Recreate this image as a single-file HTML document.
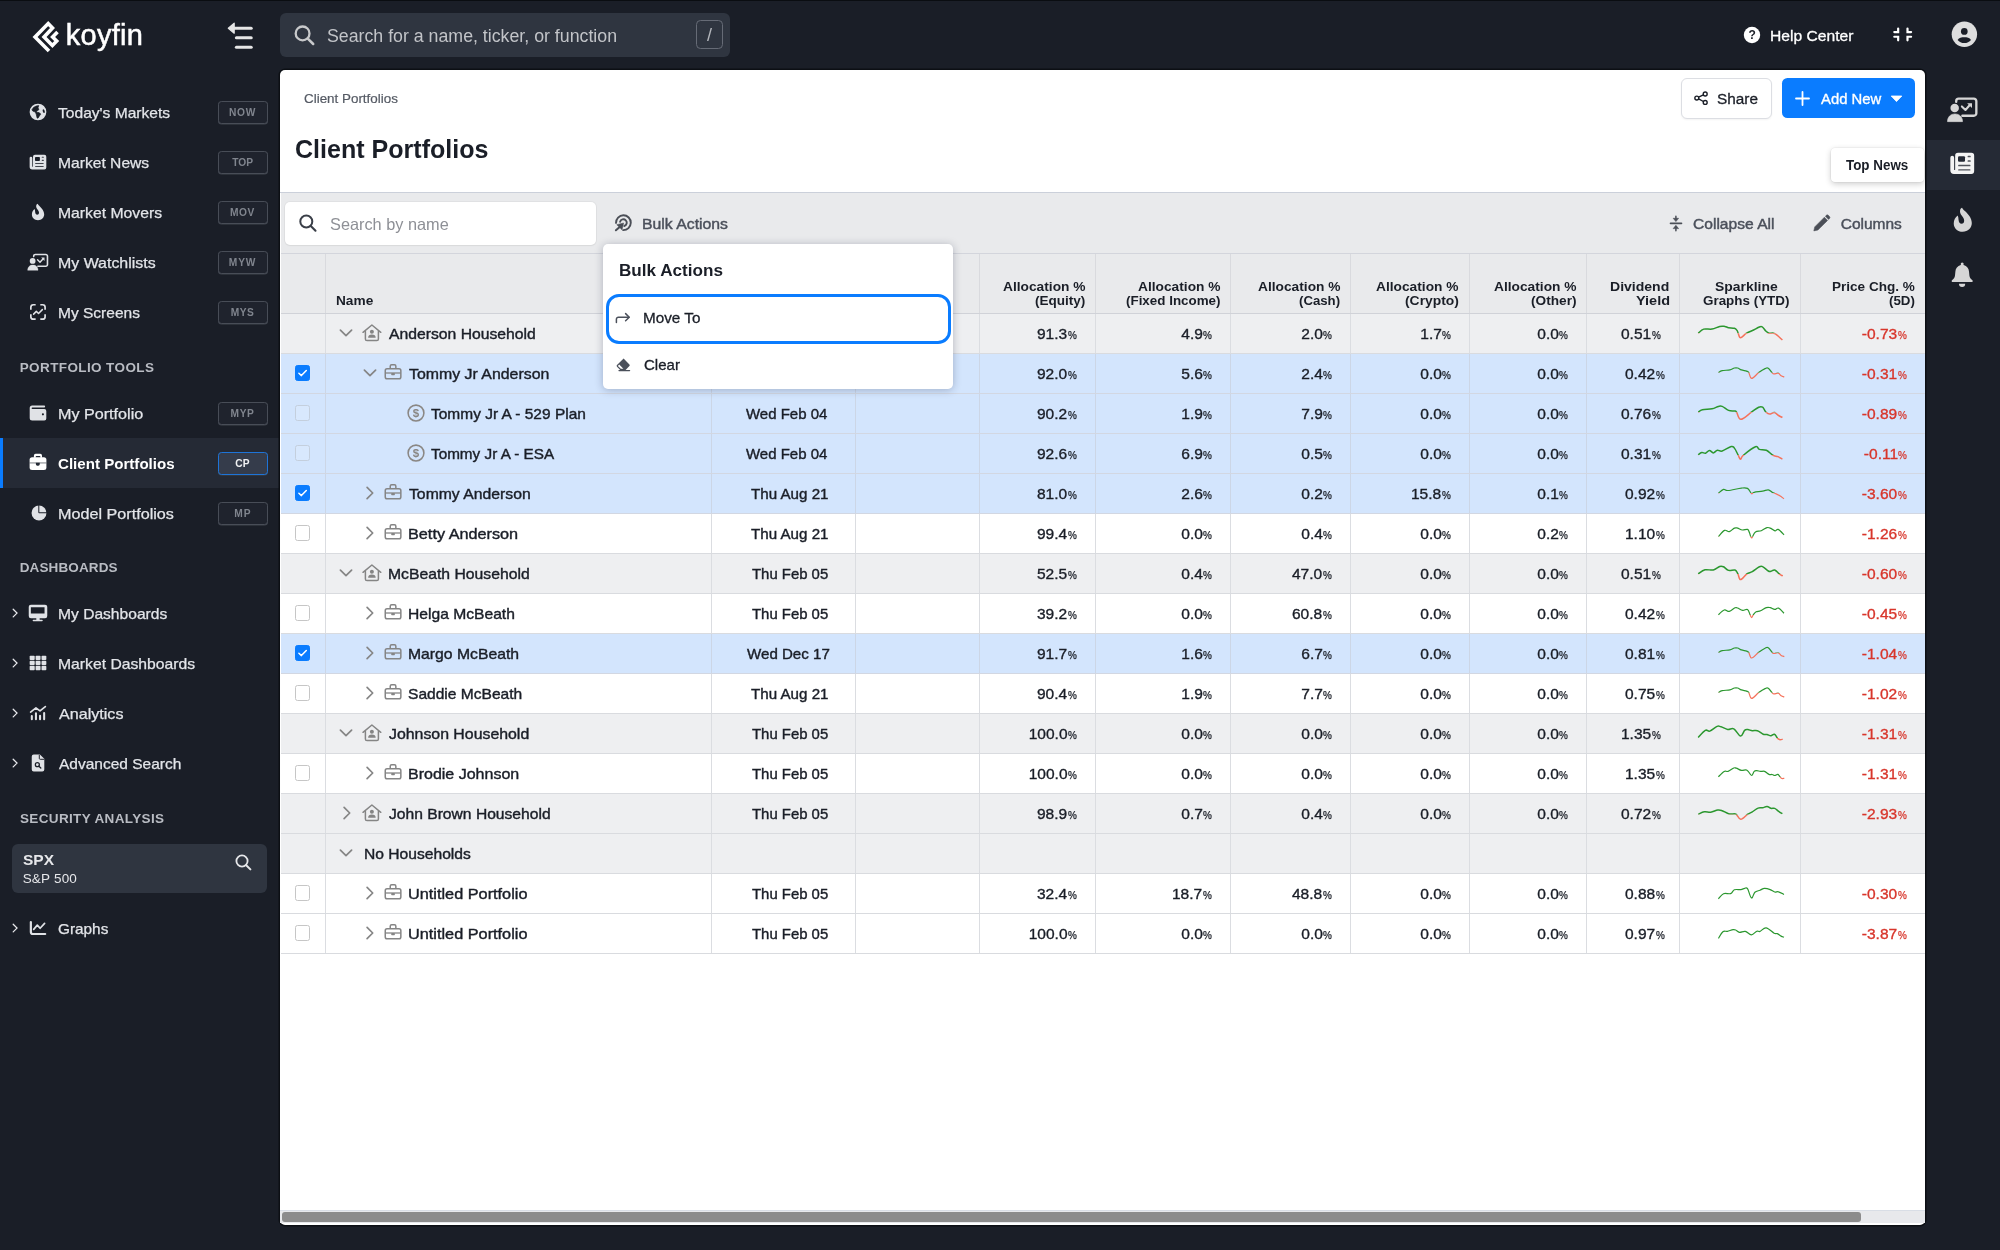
<!DOCTYPE html>
<html><head><meta charset="utf-8"><title>Client Portfolios</title>
<style>
*{box-sizing:border-box;margin:0;padding:0}
html,body{width:2000px;height:1250px;overflow:hidden;background:#1a1e27;font-family:"Liberation Sans",sans-serif;}
#root{position:absolute;left:0;top:0;width:2000px;height:1250px;overflow:hidden;will-change:transform;background:#1a1e27}
.a{position:absolute}
.t{position:absolute;white-space:nowrap;line-height:20px;height:20px}
.b{font-weight:bold}
svg{position:absolute;overflow:visible}
.badge{position:absolute;left:218px;width:50px;height:23px;border:1.2px solid #484d57;border-radius:3.5px;background:#1f232d;box-shadow:0 0.6px 0 #3f444d}
.row{position:absolute;left:280px;width:1645px;height:40px;border-bottom:1px solid #d9dbdf}
.v{position:absolute;top:1px;height:40px;line-height:40px;font-size:15px;color:#1a1e27;white-space:nowrap;text-align:right;letter-spacing:0.25px;-webkit-text-stroke:0.25px #1a1e27}
.v small{font-size:10px;letter-spacing:0;margin-left:-0.3px}
.neg{color:#d8362c;-webkit-text-stroke:0.25px #d8362c}
.cb{position:absolute;left:15px;top:11.3px;width:15.2px;height:15.6px;border:1px solid #c6c6c6;border-radius:2.5px;background:#fff}
.cb.on{background:#0a7cff;border-color:#0a7cff}
.cb.dis{background:rgba(255,255,255,0.12);border-color:#c4cfdd}
</style></head>
<body><div id="root">
<div class="a" style="left:0;top:0;width:2000px;height:1.3px;background:#0a0d11"></div>
<svg style="left:0px;top:0px;" width="70" height="70" viewBox="0 0 70 70"><path d="M49,51 L35.05,37.06 L48.2,23.6 L52.5,28.1 L44.05,37.06 L52.4,45.4 L56.7,41.1 L52.6,37 L57.5,32.1" fill="none" stroke="#fff" stroke-width="3.6" stroke-linejoin="miter" stroke-miterlimit="10"/></svg>
<div class="t" style="left:65.73px;top:16.6px;font-size:29px;color:#fff;line-height:36px;height:36px;letter-spacing:0.272px;-webkit-text-stroke:0.5px #fff;">koyfin</div>
<svg style="left:220px;top:10px;" width="40" height="50" viewBox="0 0 40 50"><g fill="none" stroke="#e6e6e6" stroke-width="3.1" stroke-linecap="round" stroke-linejoin="round"><path d="M13,18.2 H31.2"/><path d="M16.4,27.7 H31.2"/><path d="M16.4,37.3 H31.2"/></g><path d="M8.3,18.2 L14.2,13.2 V23.2 Z" fill="#e6e6e6" stroke="#e6e6e6" stroke-width="1.2" stroke-linejoin="round"/></svg>
<div class="a" style="left:280px;top:13px;width:450px;height:44px;background:#2f3540;border-radius:6px"></div>
<svg style="left:292px;top:23px;" width="26" height="26" viewBox="0 0 26 26"><circle cx="10.6" cy="10.4" r="6.9" fill="none" stroke="#c8c9cb" stroke-width="2.3"/><path d="M15.8,15.6 L21.2,21" stroke="#c8c9cb" stroke-width="2.5" stroke-linecap="round"/></svg>
<div class="t" style="left:327.40px;top:23.6px;font-size:17.5px;color:#c2c4c8;line-height:24px;height:24px;transform:scaleX(1.0142);transform-origin:0 50%;">Search for a name, ticker, or function</div>
<div class="a" style="left:695.6px;top:20.2px;width:27.8px;height:29.2px;border:1px solid #666b76;border-radius:4.5px;color:#b4b7bc;font-size:18px;line-height:28px;text-align:center">/</div>
<svg style="left:1743px;top:26px;" width="18" height="18" viewBox="0 0 18 18"><circle cx="9" cy="9" r="8.2" fill="#fff"/></svg>
<div class="t b" style="left:1748.5px;top:27px;font-size:12px;line-height:16px;height:16px;color:#1a1e27">?</div>
<div class="t" style="left:1769.99px;top:25.6px;font-size:15.5px;color:#fff;line-height:20px;height:20px;-webkit-text-stroke:0.3px #fff;transform:scaleX(1.0087);transform-origin:0 50%;">Help Center</div>
<svg style="left:1880px;top:15px;" width="40" height="40" viewBox="0 0 40 40"><g fill="none" stroke="#fff" stroke-width="2.2" stroke-linecap="round" stroke-linejoin="miter"><path d="M14.3,17.05 H18.15 V13.5"/><path d="M31.1,17.05 H27.5 V13.5"/><path d="M14.3,21.75 H18.15 V25.3"/><path d="M31.1,21.75 H27.5 V25.3"/></g></svg>
<svg style="left:1951px;top:21px;" width="27" height="27" viewBox="0 0 27 27"><circle cx="13.4" cy="13.2" r="12.7" fill="#dedede"/><circle cx="13.3" cy="10.4" r="3.35" fill="#1a1e27"/><path d="M6.6,18.9 C8,16.7 10.6,16.3 13.3,16.3 C16,16.3 18.6,16.7 20,18.9 C18.4,20.9 16,22.1 13.3,22.1 C10.6,22.1 8.2,20.9 6.6,18.9 Z" fill="#1a1e27"/></svg>
<div class="a" style="left:0;top:438px;width:279px;height:50px;background:#252a35"></div>
<div class="a" style="left:0;top:438px;width:3px;height:50px;background:#0a7cff"></div>
<div class="t" style="left:58.43px;top:102.6px;font-size:15px;color:#e3e5e9;line-height:20px;height:20px;-webkit-text-stroke:0.25px #e3e5e9;transform:scaleX(1.0395);transform-origin:0 50%;">Today&#x27;s Markets</div>
<div class="badge" style="top:100.9px;"></div>
<div class="t" style="left:229.02px;top:106.9px;font-size:10.2px;color:#80858e;line-height:12px;height:12px;font-weight:bold;letter-spacing:0.676px;">NOW</div>
<svg style="left:28.30px;top:101.55px" width="20.00" height="20.00" viewBox="0 0 20 20"><circle cx="10" cy="10" r="8.35" fill="#e0e2e6"/><path d="M4,7.65 L5.55,5.4 L8.24,4.05 L10.7,3.6 L10.03,5.85 L10.9,7.65 L9.1,8.75 L8.2,9.9 L11.4,10.75 L12.7,12.1 L11.4,13.9 L10,16.15 L9.1,15.95 L8.2,12.1 L7.3,10.1 L4.7,9 Z" fill="#1a1e27" stroke="#1a1e27" stroke-width="0.7" stroke-linejoin="round"/><ellipse cx="15.74" cy="9.1" rx="0.95" ry="1.9" transform="rotate(-18 15.74 9.1)" fill="#1a1e27"/></svg>
<div class="t" style="left:57.56px;top:152.6px;font-size:15px;color:#e3e5e9;line-height:20px;height:20px;-webkit-text-stroke:0.25px #e3e5e9;transform:scaleX(1.0418);transform-origin:0 50%;">Market News</div>
<div class="badge" style="top:150.9px;"></div>
<div class="t" style="left:232.18px;top:156.9px;font-size:10.2px;color:#80858e;line-height:12px;height:12px;font-weight:bold;letter-spacing:0.031px;">TOP</div>
<svg style="left:28.30px;top:151.80px" width="20.00" height="20.00" viewBox="0 0 20 20"><path d="M7,2.7 H16.3 A2,2 0 0 1 18.3,4.7 V15.4 A2,2 0 0 1 16.3,17.4 H4.2 A2.6,2.6 0 0 1 1.63,14.8 V6.1 A1.33,1.33 0 0 1 4.3,6.1 V14.4 A0.35,0.35 0 0 0 5,14.4 V4.7 A2,2 0 0 1 7,2.7 Z" fill="#e0e2e6"/><rect x="7" y="5.05" width="4.9" height="3.9" rx="0.8" fill="#1a1e27"/><rect x="13.7" y="4.8" width="2.2" height="1.0" rx="0.4" fill="#1a1e27" opacity="0.8"/><rect x="13.7" y="7.85" width="2.2" height="1.05" rx="0.4" fill="#1a1e27" opacity="0.8"/><rect x="7.1" y="11.05" width="8.6" height="1.0" rx="0.4" fill="#1a1e27" opacity="0.8"/><rect x="7.1" y="14.1" width="8.6" height="1.0" rx="0.4" fill="#1a1e27" opacity="0.8"/></svg>
<div class="t" style="left:57.55px;top:202.6px;font-size:15px;color:#e3e5e9;line-height:20px;height:20px;-webkit-text-stroke:0.25px #e3e5e9;transform:scaleX(1.0497);transform-origin:0 50%;">Market Movers</div>
<div class="badge" style="top:200.9px;"></div>
<div class="t" style="left:230.02px;top:206.9px;font-size:10.2px;color:#80858e;line-height:12px;height:12px;font-weight:bold;letter-spacing:0.480px;">MOV</div>
<svg style="left:28.10px;top:201.80px" width="20.00" height="20.00" viewBox="0 0 20 20"><path d="M9.56,1.8 C10.3,3 11,3.6 11.9,4.5 C13.6,6.2 16.2,9 16.2,12.3 C16.2,15.7 13.5,18.25 10,18.25 C6.5,18.25 3.9,15.8 3.9,12.6 C3.9,10.2 5,8.2 6.65,7.1 C7,8 7.1,9 7.2,10.2 C7.3,11.8 8.1,12.7 9.2,12.7 C10.3,12.7 11,11.9 11,10.7 C11,9.4 10.2,8.4 9.3,7.2 C8.4,6 7.9,4.6 8.3,3.2 C8.5,2.5 9,2 9.56,1.8 Z" fill="#e0e2e6"/></svg>
<div class="t" style="left:57.54px;top:252.6px;font-size:15px;color:#e3e5e9;line-height:20px;height:20px;-webkit-text-stroke:0.25px #e3e5e9;transform:scaleX(1.0619);transform-origin:0 50%;">My Watchlists</div>
<div class="badge" style="top:250.9px;"></div>
<div class="t" style="left:228.83px;top:256.9px;font-size:10.2px;color:#80858e;line-height:12px;height:12px;font-weight:bold;letter-spacing:0.863px;">MYW</div>
<svg style="left:26.33px;top:251.80px" width="24.00" height="20.00" viewBox="0 0 24 20"><path d="M7.67,4.6 V4.2 A1.7,1.7 0 0 1 9.37,2.5 H19.77 A1.7,1.7 0 0 1 21.47,4.2 V12.5 A1.7,1.7 0 0 1 19.77,14.2 H11.9" fill="none" stroke="#e0e2e6" stroke-width="1.6" stroke-linecap="round"/><circle cx="6.63" cy="8.96" r="2.9" fill="#e0e2e6"/><path d="M1.7,18.25 C1.7,15 3.8,13 6.85,13 C9.9,13 12,15 12,18.25 Z" fill="#e0e2e6" stroke="#e0e2e6" stroke-width="0.4" stroke-linejoin="round"/><path d="M11.55,7.84 L14.02,10.3 L17.15,6.7" fill="none" stroke="#e0e2e6" stroke-width="1.4" stroke-linecap="round" stroke-linejoin="round"/><path d="M15.14,5.6 H18.49 V8.96 Z" fill="#e0e2e6"/></svg>
<div class="t" style="left:57.57px;top:302.6px;font-size:15px;color:#e3e5e9;line-height:20px;height:20px;-webkit-text-stroke:0.25px #e3e5e9;transform:scaleX(1.0342);transform-origin:0 50%;">My Screens</div>
<div class="badge" style="top:300.9px;"></div>
<div class="t" style="left:230.83px;top:306.9px;font-size:10.2px;color:#80858e;line-height:12px;height:12px;font-weight:bold;letter-spacing:0.496px;">MYS</div>
<svg style="left:28.45px;top:302.00px" width="20.00" height="20.00" viewBox="0 0 20 20"><g fill="none" stroke="#e0e2e6" stroke-width="1.7" stroke-linecap="butt" stroke-linejoin="round"><path d="M2.85,7.75 V5.25 A2.5,2.5 0 0 1 5.35,2.75 H7.65"/><path d="M12.3,2.75 H14.6 A2.5,2.5 0 0 1 17.1,5.25 V7.75"/><path d="M17.1,12.2 V14.7 A2.5,2.5 0 0 1 14.6,17.2 H12.3"/><path d="M7.65,17.2 H5.35 A2.5,2.5 0 0 1 2.85,14.7 V12.2"/><path d="M5.63,12.1 L8.31,9.4 L10.55,11.45 L14.35,7.65" stroke-width="1.5" stroke-linecap="round"/></g></svg>
<div class="t" style="left:57.50px;top:403.6px;font-size:15px;color:#e3e5e9;line-height:20px;height:20px;-webkit-text-stroke:0.25px #e3e5e9;transform:scaleX(1.0761);transform-origin:0 50%;">My Portfolio</div>
<div class="badge" style="top:401.9px;"></div>
<div class="t" style="left:230.56px;top:407.9px;font-size:10.2px;color:#80858e;line-height:12px;height:12px;font-weight:bold;letter-spacing:0.597px;">MYP</div>
<svg style="left:28.45px;top:402.55px" width="20.00" height="20.00" viewBox="0 0 20 20"><path d="M4.2,2.5 H16.2 A0.95,0.95 0 0 1 16.2,4.4 H4.4 A0.8,0.8 0 0 0 4.4,6 H16.3 A2,2 0 0 1 18.3,8 V15.5 A2,2 0 0 1 16.3,17.5 H4.2 A2.5,2.5 0 0 1 1.7,15 V5 A2.5,2.5 0 0 1 4.2,2.5 Z" fill="#e0e2e6"/><circle cx="14.92" cy="11.35" r="1.05" fill="#1a1e27"/></svg>
<div class="t" style="left:58.21px;top:453.6px;font-size:15px;color:#fff;line-height:20px;height:20px;font-weight:bold;transform:scaleX(1.0070);transform-origin:0 50%;">Client Portfolios</div>
<div class="badge" style="top:451.9px;border-color:#1e74d8;background:#353c4b;"></div>
<div class="t" style="left:235.13px;top:457.9px;font-size:10.2px;color:#f0f1f3;line-height:12px;height:12px;font-weight:bold;letter-spacing:0.272px;">CP</div>
<svg style="left:28.33px;top:451.95px" width="20.00" height="20.00" viewBox="0 0 20 20"><rect x="1.6" y="5.25" width="16.8" height="12.85" rx="2.5" fill="#fff"/><path d="M5.87,5.75 V3.65 A1.8,1.8 0 0 1 7.67,1.85 H12.23 A1.8,1.8 0 0 1 14.03,3.65 V5.75 H12.37 V4.5 A0.55,0.55 0 0 0 11.82,3.95 H8.32 A0.55,0.55 0 0 0 7.77,4.5 V5.75 Z" fill="#fff"/><path d="M1.6,10.95 H18.4" stroke="#252a35" stroke-width="1.0" opacity="0.6"/><path d="M7.87,10.7 H11.77 V12.2 A1.45,1.45 0 0 1 10.32,13.65 H9.32 A1.45,1.45 0 0 1 7.87,12.2 Z" fill="#252a35"/></svg>
<div class="t" style="left:57.50px;top:503.6px;font-size:15px;color:#e3e5e9;line-height:20px;height:20px;-webkit-text-stroke:0.25px #e3e5e9;transform:scaleX(1.0777);transform-origin:0 50%;">Model Portfolios</div>
<div class="badge" style="top:501.9px;"></div>
<div class="t" style="left:234.14px;top:507.9px;font-size:10.2px;color:#80858e;line-height:12px;height:12px;font-weight:bold;letter-spacing:1.018px;">MP</div>
<svg style="left:28.55px;top:502.80px" width="20.00" height="20.00" viewBox="0 0 20 20"><circle cx="10" cy="10" r="7.45" fill="#e0e2e6"/><path d="M9.8,2 V9.75 H18" fill="none" stroke="#1a1e27" stroke-width="1.0"/></svg>
<div class="t" style="left:57.56px;top:603.6px;font-size:15px;color:#e3e5e9;line-height:20px;height:20px;-webkit-text-stroke:0.25px #e3e5e9;transform:scaleX(1.0400);transform-origin:0 50%;">My Dashboards</div>
<svg style="left:28.45px;top:603.10px" width="20.00" height="20.00" viewBox="0 0 20 20"><path d="M2.95,1.65 H17.05 A2.2,2.2 0 0 1 19.25,3.85 V13 A2.2,2.2 0 0 1 17.05,15.2 H2.95 A2.2,2.2 0 0 1 0.75,13 V3.85 A2.2,2.2 0 0 1 2.95,1.65 Z M2.85,4.15 V10.6 H16.55 V4.15 Z" fill="#e0e2e6" fill-rule="evenodd"/><rect x="8.3" y="15" width="3.35" height="2.2" fill="#e0e2e6"/><rect x="4.65" y="16.75" width="10.1" height="1.55" rx="0.77" fill="#e0e2e6"/></svg>
<svg style="left:9px;top:606px;" width="12" height="14" viewBox="0 0 12 14"><path d="M4.2,3.3 L8,7.1 L4.2,10.9" fill="none" stroke="#e8e9ec" stroke-width="1.3" stroke-linecap="round" stroke-linejoin="miter"/></svg>
<div class="t" style="left:57.55px;top:653.6px;font-size:15px;color:#e3e5e9;line-height:20px;height:20px;-webkit-text-stroke:0.25px #e3e5e9;transform:scaleX(1.0480);transform-origin:0 50%;">Market Dashboards</div>
<svg style="left:28.27px;top:653.15px" width="20.00" height="20.00" viewBox="0 0 20 20"><rect x="1.66" y="2.65" width="5.04" height="4.30" rx="0.8" fill="#e0e2e6"/><rect x="7.6" y="2.65" width="4.93" height="4.30" rx="0.8" fill="#e0e2e6"/><rect x="13.53" y="2.65" width="4.80" height="4.30" rx="0.8" fill="#e0e2e6"/><rect x="1.66" y="7.85" width="5.04" height="4.10" rx="0.8" fill="#e0e2e6"/><rect x="7.6" y="7.85" width="4.93" height="4.10" rx="0.8" fill="#e0e2e6"/><rect x="13.53" y="7.85" width="4.80" height="4.10" rx="0.8" fill="#e0e2e6"/><rect x="1.66" y="12.85" width="5.04" height="4.50" rx="0.8" fill="#e0e2e6"/><rect x="7.6" y="12.85" width="4.93" height="4.50" rx="0.8" fill="#e0e2e6"/><rect x="13.53" y="12.85" width="4.80" height="4.50" rx="0.8" fill="#e0e2e6"/></svg>
<svg style="left:9px;top:656px;" width="12" height="14" viewBox="0 0 12 14"><path d="M4.2,3.3 L8,7.1 L4.2,10.9" fill="none" stroke="#e8e9ec" stroke-width="1.3" stroke-linecap="round" stroke-linejoin="miter"/></svg>
<div class="t" style="left:58.55px;top:703.6px;font-size:15px;color:#e3e5e9;line-height:20px;height:20px;-webkit-text-stroke:0.25px #e3e5e9;transform:scaleX(1.0739);transform-origin:0 50%;">Analytics</div>
<svg style="left:28.35px;top:703.00px" width="20.00" height="20.00" viewBox="0 0 20 20"><path d="M3.82,13.1 V16.15 M7.95,10.2 V16.15 M12.05,12.7 V16.15 M16.15,10.1 V16.15" fill="none" stroke="#e0e2e6" stroke-width="2.05" stroke-linecap="round"/><path d="M2.6,9.1 L7.95,4.95 L12,7.87 L17.35,3.6" fill="none" stroke="#e0e2e6" stroke-width="1.7" stroke-linecap="round" stroke-linejoin="round"/></svg>
<svg style="left:9px;top:706px;" width="12" height="14" viewBox="0 0 12 14"><path d="M4.2,3.3 L8,7.1 L4.2,10.9" fill="none" stroke="#e8e9ec" stroke-width="1.3" stroke-linecap="round" stroke-linejoin="miter"/></svg>
<div class="t" style="left:58.60px;top:753.6px;font-size:15px;color:#e3e5e9;line-height:20px;height:20px;-webkit-text-stroke:0.25px #e3e5e9;transform:scaleX(1.0334);transform-origin:0 50%;">Advanced Search</div>
<svg style="left:28.20px;top:753.00px" width="20.00" height="20.00" viewBox="0 0 20 20"><path d="M5.75,1.6 H11.9 L16.3,5.85 V16.4 A2,2 0 0 1 14.3,18.4 H5.75 A2,2 0 0 1 3.75,16.4 V3.6 A2,2 0 0 1 5.75,1.6 Z" fill="#e0e2e6"/><path d="M11.3,1.8 V5.4 A0.9,0.9 0 0 0 12.2,6.3 H16.2" fill="none" stroke="#1a1e27" stroke-width="0.95"/><circle cx="9.35" cy="11.7" r="2.0" fill="none" stroke="#1a1e27" stroke-width="1.25"/><path d="M10.9,13.3 L12.8,15" stroke="#1a1e27" stroke-width="1.35" stroke-linecap="round"/></svg>
<svg style="left:9px;top:756px;" width="12" height="14" viewBox="0 0 12 14"><path d="M4.2,3.3 L8,7.1 L4.2,10.9" fill="none" stroke="#e8e9ec" stroke-width="1.3" stroke-linecap="round" stroke-linejoin="miter"/></svg>
<div class="t" style="left:58.37px;top:918.6px;font-size:15px;color:#e3e5e9;line-height:20px;height:20px;-webkit-text-stroke:0.25px #e3e5e9;transform:scaleX(1.0233);transform-origin:0 50%;">Graphs</div>
<svg style="left:28.30px;top:917.70px" width="20.00" height="20.00" viewBox="0 0 20 20"><path d="M2.86,4 V14 A2,2 0 0 0 4.86,16 H17.2" fill="none" stroke="#e0e2e6" stroke-width="2.2" stroke-linecap="round" stroke-linejoin="round"/><path d="M5.66,11.4 L9.3,7.1 L12.1,10.3 L16.6,5.4" fill="none" stroke="#e0e2e6" stroke-width="1.7" stroke-linecap="round" stroke-linejoin="round"/></svg>
<svg style="left:9px;top:921px;" width="12" height="14" viewBox="0 0 12 14"><path d="M4.2,3.3 L8,7.1 L4.2,10.9" fill="none" stroke="#e8e9ec" stroke-width="1.3" stroke-linecap="round" stroke-linejoin="miter"/></svg>
<div class="t" style="left:19.72px;top:359.7px;font-size:13.5px;color:#b9bcc3;line-height:16px;height:16px;font-weight:bold;letter-spacing:0.389px;">PORTFOLIO TOOLS</div>
<div class="t" style="left:19.72px;top:560.4px;font-size:13.5px;color:#b9bcc3;line-height:16px;height:16px;font-weight:bold;letter-spacing:0.128px;">DASHBOARDS</div>
<div class="t" style="left:19.90px;top:811.0px;font-size:13.5px;color:#b9bcc3;line-height:16px;height:16px;font-weight:bold;letter-spacing:0.370px;">SECURITY ANALYSIS</div>
<div class="a" style="left:12px;top:844px;width:255px;height:49px;background:#2f3540;border-radius:6px"></div>
<div class="t" style="left:23.06px;top:850.3px;font-size:15.5px;color:#e6e7ea;line-height:20px;height:20px;font-weight:bold;letter-spacing:-0.026px;">SPX</div>
<div class="t" style="left:22.68px;top:870.0px;font-size:13.5px;color:#e6e7ea;line-height:18px;height:18px;letter-spacing:0.191px;">S&amp;P 500</div>
<svg style="left:234px;top:853px;" width="20" height="20" viewBox="0 0 20 20"><circle cx="8" cy="8" r="5.6" fill="none" stroke="#e6e7ea" stroke-width="1.8"/><path d="M12.2,12.2 L16.4,16.4" stroke="#e6e7ea" stroke-width="2" stroke-linecap="round"/></svg>
<div class="a" style="left:1925px;top:140px;width:75px;height:50px;background:#252a35"></div>
<svg style="left:1944.73px;top:94.50px" width="35.04" height="29.20" viewBox="0 0 24 20"><path d="M7.67,4.6 V4.2 A1.7,1.7 0 0 1 9.37,2.5 H19.77 A1.7,1.7 0 0 1 21.47,4.2 V12.5 A1.7,1.7 0 0 1 19.77,14.2 H11.9" fill="none" stroke="#d6d6d6" stroke-width="1.6" stroke-linecap="round"/><circle cx="6.63" cy="8.96" r="2.9" fill="#d6d6d6"/><path d="M1.7,18.25 C1.7,15 3.8,13 6.85,13 C9.9,13 12,15 12,18.25 Z" fill="#d6d6d6" stroke="#d6d6d6" stroke-width="0.4" stroke-linejoin="round"/><path d="M11.55,7.84 L14.02,10.3 L17.15,6.7" fill="none" stroke="#d6d6d6" stroke-width="1.4" stroke-linecap="round" stroke-linejoin="round"/><path d="M15.14,5.6 H18.49 V8.96 Z" fill="#d6d6d6"/></svg>
<svg style="left:1947.95px;top:149.45px" width="28.60" height="28.60" viewBox="0 0 20 20"><path d="M7,2.7 H16.3 A2,2 0 0 1 18.3,4.7 V15.4 A2,2 0 0 1 16.3,17.4 H4.2 A2.6,2.6 0 0 1 1.63,14.8 V6.1 A1.33,1.33 0 0 1 4.3,6.1 V14.4 A0.35,0.35 0 0 0 5,14.4 V4.7 A2,2 0 0 1 7,2.7 Z" fill="#f4f4f4"/><rect x="7" y="5.05" width="4.9" height="3.9" rx="0.8" fill="#252a35"/><rect x="13.7" y="4.8" width="2.2" height="1.0" rx="0.4" fill="#252a35" opacity="0.8"/><rect x="13.7" y="7.85" width="2.2" height="1.05" rx="0.4" fill="#252a35" opacity="0.8"/><rect x="7.1" y="11.05" width="8.6" height="1.0" rx="0.4" fill="#252a35" opacity="0.8"/><rect x="7.1" y="14.1" width="8.6" height="1.0" rx="0.4" fill="#252a35" opacity="0.8"/></svg>
<svg style="left:1947.80px;top:204.85px" width="29.40" height="29.40" viewBox="0 0 20 20"><path d="M9.56,1.8 C10.3,3 11,3.6 11.9,4.5 C13.6,6.2 16.2,9 16.2,12.3 C16.2,15.7 13.5,18.25 10,18.25 C6.5,18.25 3.9,15.8 3.9,12.6 C3.9,10.2 5,8.2 6.65,7.1 C7,8 7.1,9 7.2,10.2 C7.3,11.8 8.1,12.7 9.2,12.7 C10.3,12.7 11,11.9 11,10.7 C11,9.4 10.2,8.4 9.3,7.2 C8.4,6 7.9,4.6 8.3,3.2 C8.5,2.5 9,2 9.56,1.8 Z" fill="#d6d6d6"/></svg>
<svg style="left:1942px;top:256px;" width="40" height="36" viewBox="0 0 40 36"><circle cx="20.2" cy="8" r="1.5" fill="#d6d6d6"/><path d="M18.7,9 C15.5,9.8 13.6,12.4 13.4,15.6 L13,19.5 C12.8,21.6 11.6,23 10,24.2 C9.4,24.7 9.6,26 10.6,26.1 H29.8 C30.8,26 31,24.7 30.4,24.2 C28.8,23 27.6,21.6 27.4,19.5 L27,15.6 C26.8,12.4 24.9,9.8 21.7,9 Z" fill="#d6d6d6"/><path d="M17,27.8 H23.2 A3.1,3.2 0 0 1 17,27.8 Z" fill="#d6d6d6"/></svg>
<div class="a" style="left:279.6px;top:69.6px;width:1645.4px;height:1155.4px;background:#fff;border-radius:5px;box-shadow:0 0 0 1.5px #0c0f14"></div>
<div class="t" style="left:304.44px;top:91.1px;font-size:12.5px;color:#555a64;line-height:16px;height:16px;-webkit-text-stroke:0.2px #555a64;transform:scaleX(1.0722);transform-origin:0 50%;">Client Portfolios</div>
<div class="t" style="left:295.44px;top:133.2px;font-size:25px;color:#1a1e27;line-height:32px;height:32px;font-weight:bold;transform:scaleX(1.0024);transform-origin:0 50%;">Client Portfolios</div>
<div class="a" style="left:1680.5px;top:77.6px;width:91.5px;height:41px;border:1px solid #dcdee3;border-radius:6px;background:#fff;box-shadow:0 1px 2px rgba(0,0,0,0.05)"></div>
<svg style="left:1692px;top:89px;" width="18" height="18" viewBox="0 0 18 18"><g fill="none" stroke="#1a1e27" stroke-width="1.4"><circle cx="4.8" cy="9.05" r="1.95"/><circle cx="13.2" cy="5" r="1.95"/><circle cx="13.2" cy="13.4" r="1.95"/><path d="M6.6,8.2 L11.4,5.9 M6.6,9.9 L11.4,12.5"/></g></svg>
<div class="t" style="left:1717.39px;top:88.9px;font-size:15.5px;color:#1a1e27;line-height:20px;height:20px;-webkit-text-stroke:0.3px #1a1e27;transform:scaleX(0.9889);transform-origin:0 50%;">Share</div>
<div class="a" style="left:1782px;top:77.6px;width:133px;height:40.8px;border-radius:5.5px;background:#0a7cff"></div>
<svg style="left:1795px;top:91px;" width="15" height="15" viewBox="0 0 15 15"><path d="M7.5,1 V14 M1,7.5 H14" stroke="#fff" stroke-width="1.8" stroke-linecap="round"/></svg>
<div class="t" style="left:1820.50px;top:88.9px;font-size:15.5px;color:#fff;line-height:20px;height:20px;-webkit-text-stroke:0.35px #fff;transform:scaleX(0.9575);transform-origin:0 50%;">Add New</div>
<svg style="left:1890px;top:95px;" width="13" height="8" viewBox="0 0 13 8"><path d="M1.2,1 H11.8 L6.5,6.6Z" fill="#fff" stroke="#fff" stroke-width="0.8" stroke-linejoin="round"/></svg>
<div class="a" style="left:280px;top:191.6px;width:1645px;height:1.7px;background:#cbd0da"></div>
<div class="a" style="left:280px;top:193px;width:1645px;height:60px;background:#e9eaec"></div>
<div class="a" style="left:280px;top:253px;width:1645px;height:1px;background:#d3d5dc"></div>
<div class="a" style="left:285px;top:201.5px;width:311.2px;height:43px;background:#fff;border-radius:5px;box-shadow:0 0 0 1px rgba(0,0,0,0.035),0 1px 2px rgba(0,0,0,0.04)"></div>
<svg style="left:297px;top:212px;" width="24" height="24" viewBox="0 0 24 24"><circle cx="9.3" cy="9.5" r="6.0" fill="none" stroke="#3a3f48" stroke-width="2"/><path d="M13.8,14 L18.5,18.7" stroke="#3a3f48" stroke-width="2.1" stroke-linecap="round"/></svg>
<div class="t" style="left:330.40px;top:212.9px;font-size:16.5px;color:#8e9096;line-height:22px;height:22px;transform:scaleX(0.9882);transform-origin:0 50%;">Search by name</div>
<svg style="left:606px;top:208px;" width="40" height="32" viewBox="0 0 40 32"><g fill="none" stroke="#4b4f57" stroke-width="1.9" stroke-linecap="round"><path d="M10.0,14.9 A7.4,7.4 0 1 1 17.1,22.1"/><path d="M14.1,13.8 A3.4,3.4 0 1 1 18.3,18.0"/><path d="M9.9,22.3 L14.3,18.4" stroke-width="2"/></g><path d="M10.75,16.65 L17.65,15.0 L16.0,21.75 Z" fill="#4b4f57" stroke="#4b4f57" stroke-width="0.5" stroke-linejoin="round"/></svg>
<div class="t" style="left:641.57px;top:213.9px;font-size:15.5px;color:#4b505b;line-height:20px;height:20px;-webkit-text-stroke:0.45px #4b505b;transform:scaleX(1.0185);transform-origin:0 50%;">Bulk Actions</div>
<svg style="left:1666px;top:212px;" width="20" height="24" viewBox="0 0 20 24"><path d="M4.5,11.4 H15.5" stroke="#4b4f57" stroke-width="1.6" stroke-linecap="round"/><path d="M9.9,4.3 V6.6 M9.9,18.7 V16.4" stroke="#4b4f57" stroke-width="1.5" stroke-linecap="round"/><path d="M7.2,6.3 H12.6 L9.9,9.6 Z M7.2,16.6 H12.6 L9.9,13.3 Z" fill="#4b4f57" stroke="#4b4f57" stroke-width="0.6" stroke-linejoin="round"/></svg>
<div class="t" style="left:1693.46px;top:213.9px;font-size:15.5px;color:#4b505b;line-height:20px;height:20px;-webkit-text-stroke:0.45px #4b505b;transform:scaleX(1.0059);transform-origin:0 50%;">Collapse All</div>
<svg style="left:1812px;top:213px;" width="20" height="20" viewBox="0 0 20 20"><path d="M1.8,17.9 L2.7,13.9 L12.4,4.2 L15.6,7.4 L5.9,17.1 Z" fill="#4b4f57" stroke="#4b4f57" stroke-width="0.5" stroke-linejoin="round"/><path d="M13.4,3.2 L14.3,2.3 A1.4,1.4 0 0 1 16.3,2.3 L17.5,3.5 A1.4,1.4 0 0 1 17.5,5.5 L16.6,6.4 Z" fill="#4b4f57" stroke="#4b4f57" stroke-width="0.5" stroke-linejoin="round"/></svg>
<div class="t" style="left:1840.71px;top:213.9px;font-size:15.5px;color:#4b505b;line-height:20px;height:20px;-webkit-text-stroke:0.45px #4b505b;transform:scaleX(1.0000);transform-origin:0 50%;">Columns</div>
<div class="a" style="left:280px;top:254px;width:1645px;height:60px;background:#e9eaec"></div>
<div class="a" style="left:280px;top:313px;width:1645px;height:1px;background:#d0d2d8"></div>
<div class="a" style="left:325px;top:254px;width:1px;height:59px;background:#d9dade"></div>
<div class="a" style="left:711px;top:254px;width:1px;height:59px;background:#d9dade"></div>
<div class="a" style="left:855px;top:254px;width:1px;height:59px;background:#d9dade"></div>
<div class="a" style="left:979px;top:254px;width:1px;height:59px;background:#d9dade"></div>
<div class="a" style="left:1095px;top:254px;width:1px;height:59px;background:#d9dade"></div>
<div class="a" style="left:1230px;top:254px;width:1px;height:59px;background:#d9dade"></div>
<div class="a" style="left:1350px;top:254px;width:1px;height:59px;background:#d9dade"></div>
<div class="a" style="left:1469px;top:254px;width:1px;height:59px;background:#d9dade"></div>
<div class="a" style="left:1586px;top:254px;width:1px;height:59px;background:#d9dade"></div>
<div class="a" style="left:1679px;top:254px;width:1px;height:59px;background:#d9dade"></div>
<div class="a" style="left:1800px;top:254px;width:1px;height:59px;background:#d9dade"></div>
<div class="t" style="left:335.76px;top:293.7px;font-size:12.5px;color:#1a1e27;line-height:14px;height:14px;font-weight:bold;transform:scaleX(1.0939);transform-origin:0 50%;">Name</div>
<div class="t" style="left:819.00px;top:279.8px;font-size:12.5px;color:#1a1e27;line-height:14px;height:14px;font-weight:bold;transform:scaleX(0.9797);transform-origin:0 50%;">Last</div>
<div class="t" style="left:792.00px;top:293.7px;font-size:12.5px;color:#1a1e27;line-height:14px;height:14px;font-weight:bold;transform:scaleX(1.0736);transform-origin:0 50%;">Updated</div>
<div class="t" style="left:1003.05px;top:279.8px;font-size:12.5px;color:#1a1e27;line-height:14px;height:14px;font-weight:bold;transform:scaleX(1.0998);transform-origin:0 50%;">Allocation %</div>
<div class="t" style="left:1137.73px;top:279.8px;font-size:12.5px;color:#1a1e27;line-height:14px;height:14px;font-weight:bold;transform:scaleX(1.0998);transform-origin:0 50%;">Allocation %</div>
<div class="t" style="left:1257.73px;top:279.8px;font-size:12.5px;color:#1a1e27;line-height:14px;height:14px;font-weight:bold;transform:scaleX(1.0998);transform-origin:0 50%;">Allocation %</div>
<div class="t" style="left:1376.41px;top:279.8px;font-size:12.5px;color:#1a1e27;line-height:14px;height:14px;font-weight:bold;transform:scaleX(1.0998);transform-origin:0 50%;">Allocation %</div>
<div class="t" style="left:1494.05px;top:279.8px;font-size:12.5px;color:#1a1e27;line-height:14px;height:14px;font-weight:bold;transform:scaleX(1.0998);transform-origin:0 50%;">Allocation %</div>
<div class="t" style="left:1035.14px;top:293.7px;font-size:12.5px;color:#1a1e27;line-height:14px;height:14px;font-weight:bold;transform:scaleX(1.0829);transform-origin:0 50%;">(Equity)</div>
<div class="t" style="left:1126.10px;top:293.7px;font-size:12.5px;color:#1a1e27;line-height:14px;height:14px;font-weight:bold;transform:scaleX(1.0715);transform-origin:0 50%;">(Fixed Income)</div>
<div class="t" style="left:1299.31px;top:293.7px;font-size:12.5px;color:#1a1e27;line-height:14px;height:14px;font-weight:bold;transform:scaleX(1.0552);transform-origin:0 50%;">(Cash)</div>
<div class="t" style="left:1405.13px;top:293.7px;font-size:12.5px;color:#1a1e27;line-height:14px;height:14px;font-weight:bold;transform:scaleX(1.1096);transform-origin:0 50%;">(Crypto)</div>
<div class="t" style="left:1530.97px;top:293.7px;font-size:12.5px;color:#1a1e27;line-height:14px;height:14px;font-weight:bold;transform:scaleX(1.0932);transform-origin:0 50%;">(Other)</div>
<div class="t" style="left:1610.40px;top:279.8px;font-size:12.5px;color:#1a1e27;line-height:14px;height:14px;font-weight:bold;transform:scaleX(1.1226);transform-origin:0 50%;">Dividend</div>
<div class="t" style="left:1635.69px;top:293.7px;font-size:12.5px;color:#1a1e27;line-height:14px;height:14px;font-weight:bold;transform:scaleX(1.1564);transform-origin:0 50%;">Yield</div>
<div class="t" style="left:1715.07px;top:279.8px;font-size:12.5px;color:#1a1e27;line-height:14px;height:14px;font-weight:bold;transform:scaleX(1.1135);transform-origin:0 50%;">Sparkline</div>
<div class="t" style="left:1703.05px;top:293.7px;font-size:12.5px;color:#1a1e27;line-height:14px;height:14px;font-weight:bold;transform:scaleX(1.0729);transform-origin:0 50%;">Graphs (YTD)</div>
<div class="t" style="left:1832.24px;top:279.8px;font-size:12.5px;color:#1a1e27;line-height:14px;height:14px;font-weight:bold;transform:scaleX(1.0839);transform-origin:0 50%;">Price Chg. %</div>
<div class="t" style="left:1889.31px;top:293.7px;font-size:12.5px;color:#1a1e27;line-height:14px;height:14px;font-weight:bold;transform:scaleX(1.0661);transform-origin:0 50%;">(5D)</div>
<div class="row" style="top:314px;background:#eeeff1"><div class="a" style="left:45px;top:0;width:1px;height:39px;background:#dbdde1"></div><div class="a" style="left:431px;top:0;width:1px;height:39px;background:#dbdde1"></div><div class="a" style="left:575px;top:0;width:1px;height:39px;background:#dbdde1"></div><div class="a" style="left:699px;top:0;width:1px;height:39px;background:#dbdde1"></div><div class="a" style="left:815px;top:0;width:1px;height:39px;background:#dbdde1"></div><div class="a" style="left:950px;top:0;width:1px;height:39px;background:#dbdde1"></div><div class="a" style="left:1070px;top:0;width:1px;height:39px;background:#dbdde1"></div><div class="a" style="left:1189px;top:0;width:1px;height:39px;background:#dbdde1"></div><div class="a" style="left:1306px;top:0;width:1px;height:39px;background:#dbdde1"></div><div class="a" style="left:1399px;top:0;width:1px;height:39px;background:#dbdde1"></div><div class="a" style="left:1520px;top:0;width:1px;height:39px;background:#dbdde1"></div></div>
<div class="t" style="left:389.40px;top:323.8px;font-size:15px;color:#1a1e27;line-height:20px;height:20px;-webkit-text-stroke:0.4px #1a1e27;transform:scaleX(1.0478);transform-origin:0 50%;">Anderson Household</div>
<div class="t" style="left:752.00px;top:323.8px;font-size:15px;color:#1a1e27;line-height:20px;height:20px;-webkit-text-stroke:0.4px #1a1e27;transform:scaleX(0.9925);transform-origin:0 50%;">Thu Feb 05</div>
<div class="t" style="left:1038.46px;top:323.9px;font-size:15px;color:#1a1e27;line-height:20px;height:20px;-webkit-text-stroke:0.35px #1a1e27;transform:scaleX(1.035);transform-origin:100% 50%;">91.3</div>
<div class="t" style="left:1068.00px;top:325.6px;font-size:10.3px;color:#1a1e27;line-height:20px;height:20px;-webkit-text-stroke:0.25px #1a1e27;transform:scaleX(0.9667);transform-origin:0 50%;">%</div>
<div class="t" style="left:1181.80px;top:323.9px;font-size:15px;color:#1a1e27;line-height:20px;height:20px;-webkit-text-stroke:0.35px #1a1e27;transform:scaleX(1.035);transform-origin:100% 50%;">4.9</div>
<div class="t" style="left:1203.00px;top:325.6px;font-size:10.3px;color:#1a1e27;line-height:20px;height:20px;-webkit-text-stroke:0.25px #1a1e27;transform:scaleX(0.9667);transform-origin:0 50%;">%</div>
<div class="t" style="left:1301.80px;top:323.9px;font-size:15px;color:#1a1e27;line-height:20px;height:20px;-webkit-text-stroke:0.35px #1a1e27;transform:scaleX(1.035);transform-origin:100% 50%;">2.0</div>
<div class="t" style="left:1323.00px;top:325.6px;font-size:10.3px;color:#1a1e27;line-height:20px;height:20px;-webkit-text-stroke:0.25px #1a1e27;transform:scaleX(0.9667);transform-origin:0 50%;">%</div>
<div class="t" style="left:1420.80px;top:323.9px;font-size:15px;color:#1a1e27;line-height:20px;height:20px;-webkit-text-stroke:0.35px #1a1e27;transform:scaleX(1.035);transform-origin:100% 50%;">1.7</div>
<div class="t" style="left:1442.00px;top:325.6px;font-size:10.3px;color:#1a1e27;line-height:20px;height:20px;-webkit-text-stroke:0.25px #1a1e27;transform:scaleX(0.9667);transform-origin:0 50%;">%</div>
<div class="t" style="left:1537.80px;top:323.9px;font-size:15px;color:#1a1e27;line-height:20px;height:20px;-webkit-text-stroke:0.35px #1a1e27;transform:scaleX(1.035);transform-origin:100% 50%;">0.0</div>
<div class="t" style="left:1559.00px;top:325.6px;font-size:10.3px;color:#1a1e27;line-height:20px;height:20px;-webkit-text-stroke:0.25px #1a1e27;transform:scaleX(0.9667);transform-origin:0 50%;">%</div>
<div class="t" style="left:1622.46px;top:323.9px;font-size:15px;color:#1a1e27;line-height:20px;height:20px;-webkit-text-stroke:0.35px #1a1e27;transform:scaleX(1.035);transform-origin:100% 50%;">0.51</div>
<div class="t" style="left:1652.00px;top:325.6px;font-size:10.3px;color:#1a1e27;line-height:20px;height:20px;-webkit-text-stroke:0.25px #1a1e27;transform:scaleX(0.9667);transform-origin:0 50%;">%</div>
<div class="t" style="left:1863.46px;top:323.9px;font-size:15px;color:#d8362c;line-height:20px;height:20px;-webkit-text-stroke:0.35px #d8362c;transform:scaleX(1.035);transform-origin:100% 50%;">-0.73</div>
<div class="t" style="left:1898.00px;top:325.6px;font-size:10.3px;color:#d8362c;line-height:20px;height:20px;-webkit-text-stroke:0.25px #d8362c;transform:scaleX(0.9667);transform-origin:0 50%;">%</div>
<svg style="left:338.1px;top:327.4px;" width="16" height="12" viewBox="0 0 16 12"><path d="M2.4,3.1 L8,8.7 L13.6,3.1" fill="none" stroke="#858585" stroke-width="1.7" stroke-linecap="round" stroke-linejoin="round"/></svg>
<svg style="left:360.8px;top:323px;" width="22" height="22" viewBox="0 0 22 22"><path d="M2,9.3 L10.9,2 L19.8,9.3" fill="none" stroke="#858585" stroke-width="1.5" stroke-linecap="round" stroke-linejoin="round"/><path d="M4.4,8.6 V15.9 A1.6,1.6 0 0 0 6,17.5 H15.8 A1.6,1.6 0 0 0 17.4,15.9 V8.6" fill="none" stroke="#858585" stroke-width="1.5" stroke-linecap="round"/><circle cx="10.9" cy="8.7" r="2.0" fill="#858585"/><path d="M7.1,14.7 C7.1,12.5 8.5,11.6 10.9,11.6 C13.3,11.6 14.7,12.5 14.7,14.7 Z" fill="#858585"/></svg>
<div class="row" style="top:354px;background:#d3e5fd;border-bottom-color:#d2d7e2"><div class="a" style="left:45px;top:0;width:1px;height:39px;background:#ccd6e6"></div><div class="a" style="left:431px;top:0;width:1px;height:39px;background:#ccd6e6"></div><div class="a" style="left:575px;top:0;width:1px;height:39px;background:#ccd6e6"></div><div class="a" style="left:699px;top:0;width:1px;height:39px;background:#ccd6e6"></div><div class="a" style="left:815px;top:0;width:1px;height:39px;background:#ccd6e6"></div><div class="a" style="left:950px;top:0;width:1px;height:39px;background:#ccd6e6"></div><div class="a" style="left:1070px;top:0;width:1px;height:39px;background:#ccd6e6"></div><div class="a" style="left:1189px;top:0;width:1px;height:39px;background:#ccd6e6"></div><div class="a" style="left:1306px;top:0;width:1px;height:39px;background:#ccd6e6"></div><div class="a" style="left:1399px;top:0;width:1px;height:39px;background:#ccd6e6"></div><div class="a" style="left:1520px;top:0;width:1px;height:39px;background:#ccd6e6"></div><div class="cb on"></div><svg style="left:15px;top:11.3px" width="15" height="16" viewBox="0 0 15 16"><path d="M3.9,8.3 L6.4,10.6 L11.3,5.6" fill="none" stroke="#fff" stroke-width="1.5" stroke-linecap="round" stroke-linejoin="round"/></svg></div>
<div class="t" style="left:408.69px;top:363.8px;font-size:15px;color:#1a1e27;line-height:20px;height:20px;-webkit-text-stroke:0.4px #1a1e27;transform:scaleX(1.0588);transform-origin:0 50%;">Tommy Jr Anderson</div>
<div class="t" style="left:752.00px;top:363.8px;font-size:15px;color:#1a1e27;line-height:20px;height:20px;-webkit-text-stroke:0.4px #1a1e27;transform:scaleX(0.9925);transform-origin:0 50%;">Thu Feb 05</div>
<div class="t" style="left:1038.46px;top:363.9px;font-size:15px;color:#1a1e27;line-height:20px;height:20px;-webkit-text-stroke:0.35px #1a1e27;transform:scaleX(1.035);transform-origin:100% 50%;">92.0</div>
<div class="t" style="left:1068.00px;top:365.6px;font-size:10.3px;color:#1a1e27;line-height:20px;height:20px;-webkit-text-stroke:0.25px #1a1e27;transform:scaleX(0.9667);transform-origin:0 50%;">%</div>
<div class="t" style="left:1181.80px;top:363.9px;font-size:15px;color:#1a1e27;line-height:20px;height:20px;-webkit-text-stroke:0.35px #1a1e27;transform:scaleX(1.035);transform-origin:100% 50%;">5.6</div>
<div class="t" style="left:1203.00px;top:365.6px;font-size:10.3px;color:#1a1e27;line-height:20px;height:20px;-webkit-text-stroke:0.25px #1a1e27;transform:scaleX(0.9667);transform-origin:0 50%;">%</div>
<div class="t" style="left:1301.80px;top:363.9px;font-size:15px;color:#1a1e27;line-height:20px;height:20px;-webkit-text-stroke:0.35px #1a1e27;transform:scaleX(1.035);transform-origin:100% 50%;">2.4</div>
<div class="t" style="left:1323.00px;top:365.6px;font-size:10.3px;color:#1a1e27;line-height:20px;height:20px;-webkit-text-stroke:0.25px #1a1e27;transform:scaleX(0.9667);transform-origin:0 50%;">%</div>
<div class="t" style="left:1420.80px;top:363.9px;font-size:15px;color:#1a1e27;line-height:20px;height:20px;-webkit-text-stroke:0.35px #1a1e27;transform:scaleX(1.035);transform-origin:100% 50%;">0.0</div>
<div class="t" style="left:1442.00px;top:365.6px;font-size:10.3px;color:#1a1e27;line-height:20px;height:20px;-webkit-text-stroke:0.25px #1a1e27;transform:scaleX(0.9667);transform-origin:0 50%;">%</div>
<div class="t" style="left:1537.80px;top:363.9px;font-size:15px;color:#1a1e27;line-height:20px;height:20px;-webkit-text-stroke:0.35px #1a1e27;transform:scaleX(1.035);transform-origin:100% 50%;">0.0</div>
<div class="t" style="left:1559.00px;top:365.6px;font-size:10.3px;color:#1a1e27;line-height:20px;height:20px;-webkit-text-stroke:0.25px #1a1e27;transform:scaleX(0.9667);transform-origin:0 50%;">%</div>
<div class="t" style="left:1626.46px;top:363.9px;font-size:15px;color:#1a1e27;line-height:20px;height:20px;-webkit-text-stroke:0.35px #1a1e27;transform:scaleX(1.035);transform-origin:100% 50%;">0.42</div>
<div class="t" style="left:1656.00px;top:365.6px;font-size:10.3px;color:#1a1e27;line-height:20px;height:20px;-webkit-text-stroke:0.25px #1a1e27;transform:scaleX(0.9667);transform-origin:0 50%;">%</div>
<div class="t" style="left:1863.46px;top:363.9px;font-size:15px;color:#d8362c;line-height:20px;height:20px;-webkit-text-stroke:0.35px #d8362c;transform:scaleX(1.035);transform-origin:100% 50%;">-0.31</div>
<div class="t" style="left:1898.00px;top:365.6px;font-size:10.3px;color:#d8362c;line-height:20px;height:20px;-webkit-text-stroke:0.25px #d8362c;transform:scaleX(0.9667);transform-origin:0 50%;">%</div>
<svg style="left:361.7px;top:367.4px;" width="16" height="12" viewBox="0 0 16 12"><path d="M2.4,3.1 L8,8.7 L13.6,3.1" fill="none" stroke="#858585" stroke-width="1.7" stroke-linecap="round" stroke-linejoin="round"/></svg>
<svg style="left:382.7px;top:364px;" width="20" height="20" viewBox="0 0 20 20"><rect x="2.25" y="4.85" width="15.6" height="10" rx="1.8" fill="none" stroke="#858585" stroke-width="1.5"/><path d="M7.25,4.6 V2.2 A1.4,1.4 0 0 1 8.65,0.8 H11.45 A1.4,1.4 0 0 1 12.85,2.2 V4.6" fill="none" stroke="#858585" stroke-width="1.5"/><path d="M2.4,9 H17.7" stroke="#858585" stroke-width="1.3"/><rect x="8.2" y="9" width="3.7" height="2.3" rx="0.7" fill="#858585"/></svg>
<div class="row" style="top:394px;background:#d3e5fd;border-bottom-color:#d2d7e2"><div class="a" style="left:45px;top:0;width:1px;height:39px;background:#ccd6e6"></div><div class="a" style="left:431px;top:0;width:1px;height:39px;background:#ccd6e6"></div><div class="a" style="left:575px;top:0;width:1px;height:39px;background:#ccd6e6"></div><div class="a" style="left:699px;top:0;width:1px;height:39px;background:#ccd6e6"></div><div class="a" style="left:815px;top:0;width:1px;height:39px;background:#ccd6e6"></div><div class="a" style="left:950px;top:0;width:1px;height:39px;background:#ccd6e6"></div><div class="a" style="left:1070px;top:0;width:1px;height:39px;background:#ccd6e6"></div><div class="a" style="left:1189px;top:0;width:1px;height:39px;background:#ccd6e6"></div><div class="a" style="left:1306px;top:0;width:1px;height:39px;background:#ccd6e6"></div><div class="a" style="left:1399px;top:0;width:1px;height:39px;background:#ccd6e6"></div><div class="a" style="left:1520px;top:0;width:1px;height:39px;background:#ccd6e6"></div><div class="cb dis"></div></div>
<div class="t" style="left:431.19px;top:403.8px;font-size:15px;color:#1a1e27;line-height:20px;height:20px;-webkit-text-stroke:0.4px #1a1e27;transform:scaleX(1.0320);transform-origin:0 50%;">Tommy Jr A - 529 Plan</div>
<div class="t" style="left:746.40px;top:403.8px;font-size:15px;color:#1a1e27;line-height:20px;height:20px;-webkit-text-stroke:0.4px #1a1e27;transform:scaleX(0.9988);transform-origin:0 50%;">Wed Feb 04</div>
<div class="t" style="left:1038.46px;top:403.9px;font-size:15px;color:#1a1e27;line-height:20px;height:20px;-webkit-text-stroke:0.35px #1a1e27;transform:scaleX(1.035);transform-origin:100% 50%;">90.2</div>
<div class="t" style="left:1068.00px;top:405.6px;font-size:10.3px;color:#1a1e27;line-height:20px;height:20px;-webkit-text-stroke:0.25px #1a1e27;transform:scaleX(0.9667);transform-origin:0 50%;">%</div>
<div class="t" style="left:1181.80px;top:403.9px;font-size:15px;color:#1a1e27;line-height:20px;height:20px;-webkit-text-stroke:0.35px #1a1e27;transform:scaleX(1.035);transform-origin:100% 50%;">1.9</div>
<div class="t" style="left:1203.00px;top:405.6px;font-size:10.3px;color:#1a1e27;line-height:20px;height:20px;-webkit-text-stroke:0.25px #1a1e27;transform:scaleX(0.9667);transform-origin:0 50%;">%</div>
<div class="t" style="left:1301.80px;top:403.9px;font-size:15px;color:#1a1e27;line-height:20px;height:20px;-webkit-text-stroke:0.35px #1a1e27;transform:scaleX(1.035);transform-origin:100% 50%;">7.9</div>
<div class="t" style="left:1323.00px;top:405.6px;font-size:10.3px;color:#1a1e27;line-height:20px;height:20px;-webkit-text-stroke:0.25px #1a1e27;transform:scaleX(0.9667);transform-origin:0 50%;">%</div>
<div class="t" style="left:1420.80px;top:403.9px;font-size:15px;color:#1a1e27;line-height:20px;height:20px;-webkit-text-stroke:0.35px #1a1e27;transform:scaleX(1.035);transform-origin:100% 50%;">0.0</div>
<div class="t" style="left:1442.00px;top:405.6px;font-size:10.3px;color:#1a1e27;line-height:20px;height:20px;-webkit-text-stroke:0.25px #1a1e27;transform:scaleX(0.9667);transform-origin:0 50%;">%</div>
<div class="t" style="left:1537.80px;top:403.9px;font-size:15px;color:#1a1e27;line-height:20px;height:20px;-webkit-text-stroke:0.35px #1a1e27;transform:scaleX(1.035);transform-origin:100% 50%;">0.0</div>
<div class="t" style="left:1559.00px;top:405.6px;font-size:10.3px;color:#1a1e27;line-height:20px;height:20px;-webkit-text-stroke:0.25px #1a1e27;transform:scaleX(0.9667);transform-origin:0 50%;">%</div>
<div class="t" style="left:1622.46px;top:403.9px;font-size:15px;color:#1a1e27;line-height:20px;height:20px;-webkit-text-stroke:0.35px #1a1e27;transform:scaleX(1.035);transform-origin:100% 50%;">0.76</div>
<div class="t" style="left:1652.00px;top:405.6px;font-size:10.3px;color:#1a1e27;line-height:20px;height:20px;-webkit-text-stroke:0.25px #1a1e27;transform:scaleX(0.9667);transform-origin:0 50%;">%</div>
<div class="t" style="left:1863.46px;top:403.9px;font-size:15px;color:#d8362c;line-height:20px;height:20px;-webkit-text-stroke:0.35px #d8362c;transform:scaleX(1.035);transform-origin:100% 50%;">-0.89</div>
<div class="t" style="left:1898.00px;top:405.6px;font-size:10.3px;color:#d8362c;line-height:20px;height:20px;-webkit-text-stroke:0.25px #d8362c;transform:scaleX(0.9667);transform-origin:0 50%;">%</div>
<svg style="left:406.0px;top:402.55px;" width="20" height="20" viewBox="0 0 20 20"><circle cx="10" cy="10" r="7.9" fill="none" stroke="#8a8784" stroke-width="1.55"/><text x="10" y="14" font-size="11.5" font-weight="bold" font-family="Liberation Sans" text-anchor="middle" fill="#8a8784">$</text></svg>
<div class="row" style="top:434px;background:#d3e5fd;border-bottom-color:#d2d7e2"><div class="a" style="left:45px;top:0;width:1px;height:39px;background:#ccd6e6"></div><div class="a" style="left:431px;top:0;width:1px;height:39px;background:#ccd6e6"></div><div class="a" style="left:575px;top:0;width:1px;height:39px;background:#ccd6e6"></div><div class="a" style="left:699px;top:0;width:1px;height:39px;background:#ccd6e6"></div><div class="a" style="left:815px;top:0;width:1px;height:39px;background:#ccd6e6"></div><div class="a" style="left:950px;top:0;width:1px;height:39px;background:#ccd6e6"></div><div class="a" style="left:1070px;top:0;width:1px;height:39px;background:#ccd6e6"></div><div class="a" style="left:1189px;top:0;width:1px;height:39px;background:#ccd6e6"></div><div class="a" style="left:1306px;top:0;width:1px;height:39px;background:#ccd6e6"></div><div class="a" style="left:1399px;top:0;width:1px;height:39px;background:#ccd6e6"></div><div class="a" style="left:1520px;top:0;width:1px;height:39px;background:#ccd6e6"></div><div class="cb dis"></div></div>
<div class="t" style="left:431.19px;top:443.8px;font-size:15px;color:#1a1e27;line-height:20px;height:20px;-webkit-text-stroke:0.4px #1a1e27;transform:scaleX(1.0189);transform-origin:0 50%;">Tommy Jr A - ESA</div>
<div class="t" style="left:746.40px;top:443.8px;font-size:15px;color:#1a1e27;line-height:20px;height:20px;-webkit-text-stroke:0.4px #1a1e27;transform:scaleX(0.9988);transform-origin:0 50%;">Wed Feb 04</div>
<div class="t" style="left:1038.46px;top:443.9px;font-size:15px;color:#1a1e27;line-height:20px;height:20px;-webkit-text-stroke:0.35px #1a1e27;transform:scaleX(1.035);transform-origin:100% 50%;">92.6</div>
<div class="t" style="left:1068.00px;top:445.6px;font-size:10.3px;color:#1a1e27;line-height:20px;height:20px;-webkit-text-stroke:0.25px #1a1e27;transform:scaleX(0.9667);transform-origin:0 50%;">%</div>
<div class="t" style="left:1181.80px;top:443.9px;font-size:15px;color:#1a1e27;line-height:20px;height:20px;-webkit-text-stroke:0.35px #1a1e27;transform:scaleX(1.035);transform-origin:100% 50%;">6.9</div>
<div class="t" style="left:1203.00px;top:445.6px;font-size:10.3px;color:#1a1e27;line-height:20px;height:20px;-webkit-text-stroke:0.25px #1a1e27;transform:scaleX(0.9667);transform-origin:0 50%;">%</div>
<div class="t" style="left:1301.80px;top:443.9px;font-size:15px;color:#1a1e27;line-height:20px;height:20px;-webkit-text-stroke:0.35px #1a1e27;transform:scaleX(1.035);transform-origin:100% 50%;">0.5</div>
<div class="t" style="left:1323.00px;top:445.6px;font-size:10.3px;color:#1a1e27;line-height:20px;height:20px;-webkit-text-stroke:0.25px #1a1e27;transform:scaleX(0.9667);transform-origin:0 50%;">%</div>
<div class="t" style="left:1420.80px;top:443.9px;font-size:15px;color:#1a1e27;line-height:20px;height:20px;-webkit-text-stroke:0.35px #1a1e27;transform:scaleX(1.035);transform-origin:100% 50%;">0.0</div>
<div class="t" style="left:1442.00px;top:445.6px;font-size:10.3px;color:#1a1e27;line-height:20px;height:20px;-webkit-text-stroke:0.25px #1a1e27;transform:scaleX(0.9667);transform-origin:0 50%;">%</div>
<div class="t" style="left:1537.80px;top:443.9px;font-size:15px;color:#1a1e27;line-height:20px;height:20px;-webkit-text-stroke:0.35px #1a1e27;transform:scaleX(1.035);transform-origin:100% 50%;">0.0</div>
<div class="t" style="left:1559.00px;top:445.6px;font-size:10.3px;color:#1a1e27;line-height:20px;height:20px;-webkit-text-stroke:0.25px #1a1e27;transform:scaleX(0.9667);transform-origin:0 50%;">%</div>
<div class="t" style="left:1622.46px;top:443.9px;font-size:15px;color:#1a1e27;line-height:20px;height:20px;-webkit-text-stroke:0.35px #1a1e27;transform:scaleX(1.035);transform-origin:100% 50%;">0.31</div>
<div class="t" style="left:1652.00px;top:445.6px;font-size:10.3px;color:#1a1e27;line-height:20px;height:20px;-webkit-text-stroke:0.25px #1a1e27;transform:scaleX(0.9667);transform-origin:0 50%;">%</div>
<div class="t" style="left:1864.58px;top:443.9px;font-size:15px;color:#d8362c;line-height:20px;height:20px;-webkit-text-stroke:0.35px #d8362c;transform:scaleX(1.035);transform-origin:100% 50%;">-0.11</div>
<div class="t" style="left:1898.00px;top:445.6px;font-size:10.3px;color:#d8362c;line-height:20px;height:20px;-webkit-text-stroke:0.25px #d8362c;transform:scaleX(0.9667);transform-origin:0 50%;">%</div>
<svg style="left:406.0px;top:442.55px;" width="20" height="20" viewBox="0 0 20 20"><circle cx="10" cy="10" r="7.9" fill="none" stroke="#8a8784" stroke-width="1.55"/><text x="10" y="14" font-size="11.5" font-weight="bold" font-family="Liberation Sans" text-anchor="middle" fill="#8a8784">$</text></svg>
<div class="row" style="top:474px;background:#d3e5fd;border-bottom-color:#d2d7e2"><div class="a" style="left:45px;top:0;width:1px;height:39px;background:#ccd6e6"></div><div class="a" style="left:431px;top:0;width:1px;height:39px;background:#ccd6e6"></div><div class="a" style="left:575px;top:0;width:1px;height:39px;background:#ccd6e6"></div><div class="a" style="left:699px;top:0;width:1px;height:39px;background:#ccd6e6"></div><div class="a" style="left:815px;top:0;width:1px;height:39px;background:#ccd6e6"></div><div class="a" style="left:950px;top:0;width:1px;height:39px;background:#ccd6e6"></div><div class="a" style="left:1070px;top:0;width:1px;height:39px;background:#ccd6e6"></div><div class="a" style="left:1189px;top:0;width:1px;height:39px;background:#ccd6e6"></div><div class="a" style="left:1306px;top:0;width:1px;height:39px;background:#ccd6e6"></div><div class="a" style="left:1399px;top:0;width:1px;height:39px;background:#ccd6e6"></div><div class="a" style="left:1520px;top:0;width:1px;height:39px;background:#ccd6e6"></div><div class="cb on"></div><svg style="left:15px;top:11.3px" width="15" height="16" viewBox="0 0 15 16"><path d="M3.9,8.3 L6.4,10.6 L11.3,5.6" fill="none" stroke="#fff" stroke-width="1.5" stroke-linecap="round" stroke-linejoin="round"/></svg></div>
<div class="t" style="left:408.69px;top:483.8px;font-size:15px;color:#1a1e27;line-height:20px;height:20px;-webkit-text-stroke:0.4px #1a1e27;transform:scaleX(1.0497);transform-origin:0 50%;">Tommy Anderson</div>
<div class="t" style="left:750.67px;top:483.8px;font-size:15px;color:#1a1e27;line-height:20px;height:20px;-webkit-text-stroke:0.4px #1a1e27;transform:scaleX(1.0103);transform-origin:0 50%;">Thu Aug 21</div>
<div class="t" style="left:1038.46px;top:483.9px;font-size:15px;color:#1a1e27;line-height:20px;height:20px;-webkit-text-stroke:0.35px #1a1e27;transform:scaleX(1.035);transform-origin:100% 50%;">81.0</div>
<div class="t" style="left:1068.00px;top:485.6px;font-size:10.3px;color:#1a1e27;line-height:20px;height:20px;-webkit-text-stroke:0.25px #1a1e27;transform:scaleX(0.9667);transform-origin:0 50%;">%</div>
<div class="t" style="left:1181.80px;top:483.9px;font-size:15px;color:#1a1e27;line-height:20px;height:20px;-webkit-text-stroke:0.35px #1a1e27;transform:scaleX(1.035);transform-origin:100% 50%;">2.6</div>
<div class="t" style="left:1203.00px;top:485.6px;font-size:10.3px;color:#1a1e27;line-height:20px;height:20px;-webkit-text-stroke:0.25px #1a1e27;transform:scaleX(0.9667);transform-origin:0 50%;">%</div>
<div class="t" style="left:1301.80px;top:483.9px;font-size:15px;color:#1a1e27;line-height:20px;height:20px;-webkit-text-stroke:0.35px #1a1e27;transform:scaleX(1.035);transform-origin:100% 50%;">0.2</div>
<div class="t" style="left:1323.00px;top:485.6px;font-size:10.3px;color:#1a1e27;line-height:20px;height:20px;-webkit-text-stroke:0.25px #1a1e27;transform:scaleX(0.9667);transform-origin:0 50%;">%</div>
<div class="t" style="left:1412.46px;top:483.9px;font-size:15px;color:#1a1e27;line-height:20px;height:20px;-webkit-text-stroke:0.35px #1a1e27;transform:scaleX(1.035);transform-origin:100% 50%;">15.8</div>
<div class="t" style="left:1442.00px;top:485.6px;font-size:10.3px;color:#1a1e27;line-height:20px;height:20px;-webkit-text-stroke:0.25px #1a1e27;transform:scaleX(0.9667);transform-origin:0 50%;">%</div>
<div class="t" style="left:1537.80px;top:483.9px;font-size:15px;color:#1a1e27;line-height:20px;height:20px;-webkit-text-stroke:0.35px #1a1e27;transform:scaleX(1.035);transform-origin:100% 50%;">0.1</div>
<div class="t" style="left:1559.00px;top:485.6px;font-size:10.3px;color:#1a1e27;line-height:20px;height:20px;-webkit-text-stroke:0.25px #1a1e27;transform:scaleX(0.9667);transform-origin:0 50%;">%</div>
<div class="t" style="left:1626.46px;top:483.9px;font-size:15px;color:#1a1e27;line-height:20px;height:20px;-webkit-text-stroke:0.35px #1a1e27;transform:scaleX(1.035);transform-origin:100% 50%;">0.92</div>
<div class="t" style="left:1656.00px;top:485.6px;font-size:10.3px;color:#1a1e27;line-height:20px;height:20px;-webkit-text-stroke:0.25px #1a1e27;transform:scaleX(0.9667);transform-origin:0 50%;">%</div>
<div class="t" style="left:1863.46px;top:483.9px;font-size:15px;color:#d8362c;line-height:20px;height:20px;-webkit-text-stroke:0.35px #d8362c;transform:scaleX(1.035);transform-origin:100% 50%;">-3.60</div>
<div class="t" style="left:1898.00px;top:485.6px;font-size:10.3px;color:#d8362c;line-height:20px;height:20px;-webkit-text-stroke:0.25px #d8362c;transform:scaleX(0.9667);transform-origin:0 50%;">%</div>
<svg style="left:364px;top:485.4px;" width="12" height="16" viewBox="0 0 12 16"><path d="M3.1,2.4 L8.7,8 L3.1,13.6" fill="none" stroke="#858585" stroke-width="1.7" stroke-linecap="round" stroke-linejoin="round"/></svg>
<svg style="left:382.7px;top:484px;" width="20" height="20" viewBox="0 0 20 20"><rect x="2.25" y="4.85" width="15.6" height="10" rx="1.8" fill="none" stroke="#858585" stroke-width="1.5"/><path d="M7.25,4.6 V2.2 A1.4,1.4 0 0 1 8.65,0.8 H11.45 A1.4,1.4 0 0 1 12.85,2.2 V4.6" fill="none" stroke="#858585" stroke-width="1.5"/><path d="M2.4,9 H17.7" stroke="#858585" stroke-width="1.3"/><rect x="8.2" y="9" width="3.7" height="2.3" rx="0.7" fill="#858585"/></svg>
<div class="row" style="top:514px;background:#ffffff"><div class="a" style="left:45px;top:0;width:1px;height:39px;background:#dbdde1"></div><div class="a" style="left:431px;top:0;width:1px;height:39px;background:#dbdde1"></div><div class="a" style="left:575px;top:0;width:1px;height:39px;background:#dbdde1"></div><div class="a" style="left:699px;top:0;width:1px;height:39px;background:#dbdde1"></div><div class="a" style="left:815px;top:0;width:1px;height:39px;background:#dbdde1"></div><div class="a" style="left:950px;top:0;width:1px;height:39px;background:#dbdde1"></div><div class="a" style="left:1070px;top:0;width:1px;height:39px;background:#dbdde1"></div><div class="a" style="left:1189px;top:0;width:1px;height:39px;background:#dbdde1"></div><div class="a" style="left:1306px;top:0;width:1px;height:39px;background:#dbdde1"></div><div class="a" style="left:1399px;top:0;width:1px;height:39px;background:#dbdde1"></div><div class="a" style="left:1520px;top:0;width:1px;height:39px;background:#dbdde1"></div><div class="cb "></div></div>
<div class="t" style="left:407.72px;top:523.8px;font-size:15px;color:#1a1e27;line-height:20px;height:20px;-webkit-text-stroke:0.4px #1a1e27;transform:scaleX(1.0828);transform-origin:0 50%;">Betty Anderson</div>
<div class="t" style="left:750.68px;top:523.8px;font-size:15px;color:#1a1e27;line-height:20px;height:20px;-webkit-text-stroke:0.4px #1a1e27;transform:scaleX(1.0102);transform-origin:0 50%;">Thu Aug 21</div>
<div class="t" style="left:1038.46px;top:523.9px;font-size:15px;color:#1a1e27;line-height:20px;height:20px;-webkit-text-stroke:0.35px #1a1e27;transform:scaleX(1.035);transform-origin:100% 50%;">99.4</div>
<div class="t" style="left:1068.00px;top:525.6px;font-size:10.3px;color:#1a1e27;line-height:20px;height:20px;-webkit-text-stroke:0.25px #1a1e27;transform:scaleX(0.9667);transform-origin:0 50%;">%</div>
<div class="t" style="left:1181.80px;top:523.9px;font-size:15px;color:#1a1e27;line-height:20px;height:20px;-webkit-text-stroke:0.35px #1a1e27;transform:scaleX(1.035);transform-origin:100% 50%;">0.0</div>
<div class="t" style="left:1203.00px;top:525.6px;font-size:10.3px;color:#1a1e27;line-height:20px;height:20px;-webkit-text-stroke:0.25px #1a1e27;transform:scaleX(0.9667);transform-origin:0 50%;">%</div>
<div class="t" style="left:1301.80px;top:523.9px;font-size:15px;color:#1a1e27;line-height:20px;height:20px;-webkit-text-stroke:0.35px #1a1e27;transform:scaleX(1.035);transform-origin:100% 50%;">0.4</div>
<div class="t" style="left:1323.00px;top:525.6px;font-size:10.3px;color:#1a1e27;line-height:20px;height:20px;-webkit-text-stroke:0.25px #1a1e27;transform:scaleX(0.9667);transform-origin:0 50%;">%</div>
<div class="t" style="left:1420.80px;top:523.9px;font-size:15px;color:#1a1e27;line-height:20px;height:20px;-webkit-text-stroke:0.35px #1a1e27;transform:scaleX(1.035);transform-origin:100% 50%;">0.0</div>
<div class="t" style="left:1442.00px;top:525.6px;font-size:10.3px;color:#1a1e27;line-height:20px;height:20px;-webkit-text-stroke:0.25px #1a1e27;transform:scaleX(0.9667);transform-origin:0 50%;">%</div>
<div class="t" style="left:1537.80px;top:523.9px;font-size:15px;color:#1a1e27;line-height:20px;height:20px;-webkit-text-stroke:0.35px #1a1e27;transform:scaleX(1.035);transform-origin:100% 50%;">0.2</div>
<div class="t" style="left:1559.00px;top:525.6px;font-size:10.3px;color:#1a1e27;line-height:20px;height:20px;-webkit-text-stroke:0.25px #1a1e27;transform:scaleX(0.9667);transform-origin:0 50%;">%</div>
<div class="t" style="left:1626.46px;top:523.9px;font-size:15px;color:#1a1e27;line-height:20px;height:20px;-webkit-text-stroke:0.35px #1a1e27;transform:scaleX(1.035);transform-origin:100% 50%;">1.10</div>
<div class="t" style="left:1656.00px;top:525.6px;font-size:10.3px;color:#1a1e27;line-height:20px;height:20px;-webkit-text-stroke:0.25px #1a1e27;transform:scaleX(0.9667);transform-origin:0 50%;">%</div>
<div class="t" style="left:1863.46px;top:523.9px;font-size:15px;color:#d8362c;line-height:20px;height:20px;-webkit-text-stroke:0.35px #d8362c;transform:scaleX(1.035);transform-origin:100% 50%;">-1.26</div>
<div class="t" style="left:1898.00px;top:525.6px;font-size:10.3px;color:#d8362c;line-height:20px;height:20px;-webkit-text-stroke:0.25px #d8362c;transform:scaleX(0.9667);transform-origin:0 50%;">%</div>
<svg style="left:364px;top:525.4px;" width="12" height="16" viewBox="0 0 12 16"><path d="M3.1,2.4 L8.7,8 L3.1,13.6" fill="none" stroke="#858585" stroke-width="1.7" stroke-linecap="round" stroke-linejoin="round"/></svg>
<svg style="left:382.7px;top:524px;" width="20" height="20" viewBox="0 0 20 20"><rect x="2.25" y="4.85" width="15.6" height="10" rx="1.8" fill="none" stroke="#858585" stroke-width="1.5"/><path d="M7.25,4.6 V2.2 A1.4,1.4 0 0 1 8.65,0.8 H11.45 A1.4,1.4 0 0 1 12.85,2.2 V4.6" fill="none" stroke="#858585" stroke-width="1.5"/><path d="M2.4,9 H17.7" stroke="#858585" stroke-width="1.3"/><rect x="8.2" y="9" width="3.7" height="2.3" rx="0.7" fill="#858585"/></svg>
<div class="row" style="top:554px;background:#eeeff1"><div class="a" style="left:45px;top:0;width:1px;height:39px;background:#dbdde1"></div><div class="a" style="left:431px;top:0;width:1px;height:39px;background:#dbdde1"></div><div class="a" style="left:575px;top:0;width:1px;height:39px;background:#dbdde1"></div><div class="a" style="left:699px;top:0;width:1px;height:39px;background:#dbdde1"></div><div class="a" style="left:815px;top:0;width:1px;height:39px;background:#dbdde1"></div><div class="a" style="left:950px;top:0;width:1px;height:39px;background:#dbdde1"></div><div class="a" style="left:1070px;top:0;width:1px;height:39px;background:#dbdde1"></div><div class="a" style="left:1189px;top:0;width:1px;height:39px;background:#dbdde1"></div><div class="a" style="left:1306px;top:0;width:1px;height:39px;background:#dbdde1"></div><div class="a" style="left:1399px;top:0;width:1px;height:39px;background:#dbdde1"></div><div class="a" style="left:1520px;top:0;width:1px;height:39px;background:#dbdde1"></div></div>
<div class="t" style="left:388.35px;top:563.8px;font-size:15px;color:#1a1e27;line-height:20px;height:20px;-webkit-text-stroke:0.4px #1a1e27;transform:scaleX(1.0486);transform-origin:0 50%;">McBeath Household</div>
<div class="t" style="left:751.81px;top:563.8px;font-size:15px;color:#1a1e27;line-height:20px;height:20px;-webkit-text-stroke:0.4px #1a1e27;transform:scaleX(0.9932);transform-origin:0 50%;">Thu Feb 05</div>
<div class="t" style="left:1038.46px;top:563.9px;font-size:15px;color:#1a1e27;line-height:20px;height:20px;-webkit-text-stroke:0.35px #1a1e27;transform:scaleX(1.035);transform-origin:100% 50%;">52.5</div>
<div class="t" style="left:1068.00px;top:565.6px;font-size:10.3px;color:#1a1e27;line-height:20px;height:20px;-webkit-text-stroke:0.25px #1a1e27;transform:scaleX(0.9667);transform-origin:0 50%;">%</div>
<div class="t" style="left:1181.80px;top:563.9px;font-size:15px;color:#1a1e27;line-height:20px;height:20px;-webkit-text-stroke:0.35px #1a1e27;transform:scaleX(1.035);transform-origin:100% 50%;">0.4</div>
<div class="t" style="left:1203.00px;top:565.6px;font-size:10.3px;color:#1a1e27;line-height:20px;height:20px;-webkit-text-stroke:0.25px #1a1e27;transform:scaleX(0.9667);transform-origin:0 50%;">%</div>
<div class="t" style="left:1293.46px;top:563.9px;font-size:15px;color:#1a1e27;line-height:20px;height:20px;-webkit-text-stroke:0.35px #1a1e27;transform:scaleX(1.035);transform-origin:100% 50%;">47.0</div>
<div class="t" style="left:1323.00px;top:565.6px;font-size:10.3px;color:#1a1e27;line-height:20px;height:20px;-webkit-text-stroke:0.25px #1a1e27;transform:scaleX(0.9667);transform-origin:0 50%;">%</div>
<div class="t" style="left:1420.80px;top:563.9px;font-size:15px;color:#1a1e27;line-height:20px;height:20px;-webkit-text-stroke:0.35px #1a1e27;transform:scaleX(1.035);transform-origin:100% 50%;">0.0</div>
<div class="t" style="left:1442.00px;top:565.6px;font-size:10.3px;color:#1a1e27;line-height:20px;height:20px;-webkit-text-stroke:0.25px #1a1e27;transform:scaleX(0.9667);transform-origin:0 50%;">%</div>
<div class="t" style="left:1537.80px;top:563.9px;font-size:15px;color:#1a1e27;line-height:20px;height:20px;-webkit-text-stroke:0.35px #1a1e27;transform:scaleX(1.035);transform-origin:100% 50%;">0.0</div>
<div class="t" style="left:1559.00px;top:565.6px;font-size:10.3px;color:#1a1e27;line-height:20px;height:20px;-webkit-text-stroke:0.25px #1a1e27;transform:scaleX(0.9667);transform-origin:0 50%;">%</div>
<div class="t" style="left:1622.46px;top:563.9px;font-size:15px;color:#1a1e27;line-height:20px;height:20px;-webkit-text-stroke:0.35px #1a1e27;transform:scaleX(1.035);transform-origin:100% 50%;">0.51</div>
<div class="t" style="left:1652.00px;top:565.6px;font-size:10.3px;color:#1a1e27;line-height:20px;height:20px;-webkit-text-stroke:0.25px #1a1e27;transform:scaleX(0.9667);transform-origin:0 50%;">%</div>
<div class="t" style="left:1863.46px;top:563.9px;font-size:15px;color:#d8362c;line-height:20px;height:20px;-webkit-text-stroke:0.35px #d8362c;transform:scaleX(1.035);transform-origin:100% 50%;">-0.60</div>
<div class="t" style="left:1898.00px;top:565.6px;font-size:10.3px;color:#d8362c;line-height:20px;height:20px;-webkit-text-stroke:0.25px #d8362c;transform:scaleX(0.9667);transform-origin:0 50%;">%</div>
<svg style="left:338.1px;top:567.4px;" width="16" height="12" viewBox="0 0 16 12"><path d="M2.4,3.1 L8,8.7 L13.6,3.1" fill="none" stroke="#858585" stroke-width="1.7" stroke-linecap="round" stroke-linejoin="round"/></svg>
<svg style="left:360.8px;top:563px;" width="22" height="22" viewBox="0 0 22 22"><path d="M2,9.3 L10.9,2 L19.8,9.3" fill="none" stroke="#858585" stroke-width="1.5" stroke-linecap="round" stroke-linejoin="round"/><path d="M4.4,8.6 V15.9 A1.6,1.6 0 0 0 6,17.5 H15.8 A1.6,1.6 0 0 0 17.4,15.9 V8.6" fill="none" stroke="#858585" stroke-width="1.5" stroke-linecap="round"/><circle cx="10.9" cy="8.7" r="2.0" fill="#858585"/><path d="M7.1,14.7 C7.1,12.5 8.5,11.6 10.9,11.6 C13.3,11.6 14.7,12.5 14.7,14.7 Z" fill="#858585"/></svg>
<div class="row" style="top:594px;background:#ffffff"><div class="a" style="left:45px;top:0;width:1px;height:39px;background:#dbdde1"></div><div class="a" style="left:431px;top:0;width:1px;height:39px;background:#dbdde1"></div><div class="a" style="left:575px;top:0;width:1px;height:39px;background:#dbdde1"></div><div class="a" style="left:699px;top:0;width:1px;height:39px;background:#dbdde1"></div><div class="a" style="left:815px;top:0;width:1px;height:39px;background:#dbdde1"></div><div class="a" style="left:950px;top:0;width:1px;height:39px;background:#dbdde1"></div><div class="a" style="left:1070px;top:0;width:1px;height:39px;background:#dbdde1"></div><div class="a" style="left:1189px;top:0;width:1px;height:39px;background:#dbdde1"></div><div class="a" style="left:1306px;top:0;width:1px;height:39px;background:#dbdde1"></div><div class="a" style="left:1399px;top:0;width:1px;height:39px;background:#dbdde1"></div><div class="a" style="left:1520px;top:0;width:1px;height:39px;background:#dbdde1"></div><div class="cb "></div></div>
<div class="t" style="left:407.86px;top:603.8px;font-size:15px;color:#1a1e27;line-height:20px;height:20px;-webkit-text-stroke:0.4px #1a1e27;transform:scaleX(1.0421);transform-origin:0 50%;">Helga McBeath</div>
<div class="t" style="left:751.81px;top:603.8px;font-size:15px;color:#1a1e27;line-height:20px;height:20px;-webkit-text-stroke:0.4px #1a1e27;transform:scaleX(0.9931);transform-origin:0 50%;">Thu Feb 05</div>
<div class="t" style="left:1038.46px;top:603.9px;font-size:15px;color:#1a1e27;line-height:20px;height:20px;-webkit-text-stroke:0.35px #1a1e27;transform:scaleX(1.035);transform-origin:100% 50%;">39.2</div>
<div class="t" style="left:1068.00px;top:605.6px;font-size:10.3px;color:#1a1e27;line-height:20px;height:20px;-webkit-text-stroke:0.25px #1a1e27;transform:scaleX(0.9667);transform-origin:0 50%;">%</div>
<div class="t" style="left:1181.80px;top:603.9px;font-size:15px;color:#1a1e27;line-height:20px;height:20px;-webkit-text-stroke:0.35px #1a1e27;transform:scaleX(1.035);transform-origin:100% 50%;">0.0</div>
<div class="t" style="left:1203.00px;top:605.6px;font-size:10.3px;color:#1a1e27;line-height:20px;height:20px;-webkit-text-stroke:0.25px #1a1e27;transform:scaleX(0.9667);transform-origin:0 50%;">%</div>
<div class="t" style="left:1293.46px;top:603.9px;font-size:15px;color:#1a1e27;line-height:20px;height:20px;-webkit-text-stroke:0.35px #1a1e27;transform:scaleX(1.035);transform-origin:100% 50%;">60.8</div>
<div class="t" style="left:1323.00px;top:605.6px;font-size:10.3px;color:#1a1e27;line-height:20px;height:20px;-webkit-text-stroke:0.25px #1a1e27;transform:scaleX(0.9667);transform-origin:0 50%;">%</div>
<div class="t" style="left:1420.80px;top:603.9px;font-size:15px;color:#1a1e27;line-height:20px;height:20px;-webkit-text-stroke:0.35px #1a1e27;transform:scaleX(1.035);transform-origin:100% 50%;">0.0</div>
<div class="t" style="left:1442.00px;top:605.6px;font-size:10.3px;color:#1a1e27;line-height:20px;height:20px;-webkit-text-stroke:0.25px #1a1e27;transform:scaleX(0.9667);transform-origin:0 50%;">%</div>
<div class="t" style="left:1537.80px;top:603.9px;font-size:15px;color:#1a1e27;line-height:20px;height:20px;-webkit-text-stroke:0.35px #1a1e27;transform:scaleX(1.035);transform-origin:100% 50%;">0.0</div>
<div class="t" style="left:1559.00px;top:605.6px;font-size:10.3px;color:#1a1e27;line-height:20px;height:20px;-webkit-text-stroke:0.25px #1a1e27;transform:scaleX(0.9667);transform-origin:0 50%;">%</div>
<div class="t" style="left:1626.46px;top:603.9px;font-size:15px;color:#1a1e27;line-height:20px;height:20px;-webkit-text-stroke:0.35px #1a1e27;transform:scaleX(1.035);transform-origin:100% 50%;">0.42</div>
<div class="t" style="left:1656.00px;top:605.6px;font-size:10.3px;color:#1a1e27;line-height:20px;height:20px;-webkit-text-stroke:0.25px #1a1e27;transform:scaleX(0.9667);transform-origin:0 50%;">%</div>
<div class="t" style="left:1863.46px;top:603.9px;font-size:15px;color:#d8362c;line-height:20px;height:20px;-webkit-text-stroke:0.35px #d8362c;transform:scaleX(1.035);transform-origin:100% 50%;">-0.45</div>
<div class="t" style="left:1898.00px;top:605.6px;font-size:10.3px;color:#d8362c;line-height:20px;height:20px;-webkit-text-stroke:0.25px #d8362c;transform:scaleX(0.9667);transform-origin:0 50%;">%</div>
<svg style="left:364px;top:605.4px;" width="12" height="16" viewBox="0 0 12 16"><path d="M3.1,2.4 L8.7,8 L3.1,13.6" fill="none" stroke="#858585" stroke-width="1.7" stroke-linecap="round" stroke-linejoin="round"/></svg>
<svg style="left:382.7px;top:604px;" width="20" height="20" viewBox="0 0 20 20"><rect x="2.25" y="4.85" width="15.6" height="10" rx="1.8" fill="none" stroke="#858585" stroke-width="1.5"/><path d="M7.25,4.6 V2.2 A1.4,1.4 0 0 1 8.65,0.8 H11.45 A1.4,1.4 0 0 1 12.85,2.2 V4.6" fill="none" stroke="#858585" stroke-width="1.5"/><path d="M2.4,9 H17.7" stroke="#858585" stroke-width="1.3"/><rect x="8.2" y="9" width="3.7" height="2.3" rx="0.7" fill="#858585"/></svg>
<div class="row" style="top:634px;background:#d3e5fd;border-bottom-color:#d2d7e2"><div class="a" style="left:45px;top:0;width:1px;height:39px;background:#ccd6e6"></div><div class="a" style="left:431px;top:0;width:1px;height:39px;background:#ccd6e6"></div><div class="a" style="left:575px;top:0;width:1px;height:39px;background:#ccd6e6"></div><div class="a" style="left:699px;top:0;width:1px;height:39px;background:#ccd6e6"></div><div class="a" style="left:815px;top:0;width:1px;height:39px;background:#ccd6e6"></div><div class="a" style="left:950px;top:0;width:1px;height:39px;background:#ccd6e6"></div><div class="a" style="left:1070px;top:0;width:1px;height:39px;background:#ccd6e6"></div><div class="a" style="left:1189px;top:0;width:1px;height:39px;background:#ccd6e6"></div><div class="a" style="left:1306px;top:0;width:1px;height:39px;background:#ccd6e6"></div><div class="a" style="left:1399px;top:0;width:1px;height:39px;background:#ccd6e6"></div><div class="a" style="left:1520px;top:0;width:1px;height:39px;background:#ccd6e6"></div><div class="cb on"></div><svg style="left:15px;top:11.3px" width="15" height="16" viewBox="0 0 15 16"><path d="M3.9,8.3 L6.4,10.6 L11.3,5.6" fill="none" stroke="#fff" stroke-width="1.5" stroke-linecap="round" stroke-linejoin="round"/></svg></div>
<div class="t" style="left:407.85px;top:643.8px;font-size:15px;color:#1a1e27;line-height:20px;height:20px;-webkit-text-stroke:0.4px #1a1e27;transform:scaleX(1.0495);transform-origin:0 50%;">Margo McBeath</div>
<div class="t" style="left:746.90px;top:643.8px;font-size:15px;color:#1a1e27;line-height:20px;height:20px;-webkit-text-stroke:0.4px #1a1e27;transform:scaleX(1.0066);transform-origin:0 50%;">Wed Dec 17</div>
<div class="t" style="left:1038.46px;top:643.9px;font-size:15px;color:#1a1e27;line-height:20px;height:20px;-webkit-text-stroke:0.35px #1a1e27;transform:scaleX(1.035);transform-origin:100% 50%;">91.7</div>
<div class="t" style="left:1068.00px;top:645.6px;font-size:10.3px;color:#1a1e27;line-height:20px;height:20px;-webkit-text-stroke:0.25px #1a1e27;transform:scaleX(0.9667);transform-origin:0 50%;">%</div>
<div class="t" style="left:1181.80px;top:643.9px;font-size:15px;color:#1a1e27;line-height:20px;height:20px;-webkit-text-stroke:0.35px #1a1e27;transform:scaleX(1.035);transform-origin:100% 50%;">1.6</div>
<div class="t" style="left:1203.00px;top:645.6px;font-size:10.3px;color:#1a1e27;line-height:20px;height:20px;-webkit-text-stroke:0.25px #1a1e27;transform:scaleX(0.9667);transform-origin:0 50%;">%</div>
<div class="t" style="left:1301.80px;top:643.9px;font-size:15px;color:#1a1e27;line-height:20px;height:20px;-webkit-text-stroke:0.35px #1a1e27;transform:scaleX(1.035);transform-origin:100% 50%;">6.7</div>
<div class="t" style="left:1323.00px;top:645.6px;font-size:10.3px;color:#1a1e27;line-height:20px;height:20px;-webkit-text-stroke:0.25px #1a1e27;transform:scaleX(0.9667);transform-origin:0 50%;">%</div>
<div class="t" style="left:1420.80px;top:643.9px;font-size:15px;color:#1a1e27;line-height:20px;height:20px;-webkit-text-stroke:0.35px #1a1e27;transform:scaleX(1.035);transform-origin:100% 50%;">0.0</div>
<div class="t" style="left:1442.00px;top:645.6px;font-size:10.3px;color:#1a1e27;line-height:20px;height:20px;-webkit-text-stroke:0.25px #1a1e27;transform:scaleX(0.9667);transform-origin:0 50%;">%</div>
<div class="t" style="left:1537.80px;top:643.9px;font-size:15px;color:#1a1e27;line-height:20px;height:20px;-webkit-text-stroke:0.35px #1a1e27;transform:scaleX(1.035);transform-origin:100% 50%;">0.0</div>
<div class="t" style="left:1559.00px;top:645.6px;font-size:10.3px;color:#1a1e27;line-height:20px;height:20px;-webkit-text-stroke:0.25px #1a1e27;transform:scaleX(0.9667);transform-origin:0 50%;">%</div>
<div class="t" style="left:1626.46px;top:643.9px;font-size:15px;color:#1a1e27;line-height:20px;height:20px;-webkit-text-stroke:0.35px #1a1e27;transform:scaleX(1.035);transform-origin:100% 50%;">0.81</div>
<div class="t" style="left:1656.00px;top:645.6px;font-size:10.3px;color:#1a1e27;line-height:20px;height:20px;-webkit-text-stroke:0.25px #1a1e27;transform:scaleX(0.9667);transform-origin:0 50%;">%</div>
<div class="t" style="left:1863.46px;top:643.9px;font-size:15px;color:#d8362c;line-height:20px;height:20px;-webkit-text-stroke:0.35px #d8362c;transform:scaleX(1.035);transform-origin:100% 50%;">-1.04</div>
<div class="t" style="left:1898.00px;top:645.6px;font-size:10.3px;color:#d8362c;line-height:20px;height:20px;-webkit-text-stroke:0.25px #d8362c;transform:scaleX(0.9667);transform-origin:0 50%;">%</div>
<svg style="left:364px;top:645.4px;" width="12" height="16" viewBox="0 0 12 16"><path d="M3.1,2.4 L8.7,8 L3.1,13.6" fill="none" stroke="#858585" stroke-width="1.7" stroke-linecap="round" stroke-linejoin="round"/></svg>
<svg style="left:382.7px;top:644px;" width="20" height="20" viewBox="0 0 20 20"><rect x="2.25" y="4.85" width="15.6" height="10" rx="1.8" fill="none" stroke="#858585" stroke-width="1.5"/><path d="M7.25,4.6 V2.2 A1.4,1.4 0 0 1 8.65,0.8 H11.45 A1.4,1.4 0 0 1 12.85,2.2 V4.6" fill="none" stroke="#858585" stroke-width="1.5"/><path d="M2.4,9 H17.7" stroke="#858585" stroke-width="1.3"/><rect x="8.2" y="9" width="3.7" height="2.3" rx="0.7" fill="#858585"/></svg>
<div class="row" style="top:674px;background:#ffffff"><div class="a" style="left:45px;top:0;width:1px;height:39px;background:#dbdde1"></div><div class="a" style="left:431px;top:0;width:1px;height:39px;background:#dbdde1"></div><div class="a" style="left:575px;top:0;width:1px;height:39px;background:#dbdde1"></div><div class="a" style="left:699px;top:0;width:1px;height:39px;background:#dbdde1"></div><div class="a" style="left:815px;top:0;width:1px;height:39px;background:#dbdde1"></div><div class="a" style="left:950px;top:0;width:1px;height:39px;background:#dbdde1"></div><div class="a" style="left:1070px;top:0;width:1px;height:39px;background:#dbdde1"></div><div class="a" style="left:1189px;top:0;width:1px;height:39px;background:#dbdde1"></div><div class="a" style="left:1306px;top:0;width:1px;height:39px;background:#dbdde1"></div><div class="a" style="left:1399px;top:0;width:1px;height:39px;background:#dbdde1"></div><div class="a" style="left:1520px;top:0;width:1px;height:39px;background:#dbdde1"></div><div class="cb "></div></div>
<div class="t" style="left:408.45px;top:683.8px;font-size:15px;color:#1a1e27;line-height:20px;height:20px;-webkit-text-stroke:0.4px #1a1e27;transform:scaleX(1.0376);transform-origin:0 50%;">Saddie McBeath</div>
<div class="t" style="left:750.68px;top:683.8px;font-size:15px;color:#1a1e27;line-height:20px;height:20px;-webkit-text-stroke:0.4px #1a1e27;transform:scaleX(1.0102);transform-origin:0 50%;">Thu Aug 21</div>
<div class="t" style="left:1038.46px;top:683.9px;font-size:15px;color:#1a1e27;line-height:20px;height:20px;-webkit-text-stroke:0.35px #1a1e27;transform:scaleX(1.035);transform-origin:100% 50%;">90.4</div>
<div class="t" style="left:1068.00px;top:685.6px;font-size:10.3px;color:#1a1e27;line-height:20px;height:20px;-webkit-text-stroke:0.25px #1a1e27;transform:scaleX(0.9667);transform-origin:0 50%;">%</div>
<div class="t" style="left:1181.80px;top:683.9px;font-size:15px;color:#1a1e27;line-height:20px;height:20px;-webkit-text-stroke:0.35px #1a1e27;transform:scaleX(1.035);transform-origin:100% 50%;">1.9</div>
<div class="t" style="left:1203.00px;top:685.6px;font-size:10.3px;color:#1a1e27;line-height:20px;height:20px;-webkit-text-stroke:0.25px #1a1e27;transform:scaleX(0.9667);transform-origin:0 50%;">%</div>
<div class="t" style="left:1301.80px;top:683.9px;font-size:15px;color:#1a1e27;line-height:20px;height:20px;-webkit-text-stroke:0.35px #1a1e27;transform:scaleX(1.035);transform-origin:100% 50%;">7.7</div>
<div class="t" style="left:1323.00px;top:685.6px;font-size:10.3px;color:#1a1e27;line-height:20px;height:20px;-webkit-text-stroke:0.25px #1a1e27;transform:scaleX(0.9667);transform-origin:0 50%;">%</div>
<div class="t" style="left:1420.80px;top:683.9px;font-size:15px;color:#1a1e27;line-height:20px;height:20px;-webkit-text-stroke:0.35px #1a1e27;transform:scaleX(1.035);transform-origin:100% 50%;">0.0</div>
<div class="t" style="left:1442.00px;top:685.6px;font-size:10.3px;color:#1a1e27;line-height:20px;height:20px;-webkit-text-stroke:0.25px #1a1e27;transform:scaleX(0.9667);transform-origin:0 50%;">%</div>
<div class="t" style="left:1537.80px;top:683.9px;font-size:15px;color:#1a1e27;line-height:20px;height:20px;-webkit-text-stroke:0.35px #1a1e27;transform:scaleX(1.035);transform-origin:100% 50%;">0.0</div>
<div class="t" style="left:1559.00px;top:685.6px;font-size:10.3px;color:#1a1e27;line-height:20px;height:20px;-webkit-text-stroke:0.25px #1a1e27;transform:scaleX(0.9667);transform-origin:0 50%;">%</div>
<div class="t" style="left:1626.46px;top:683.9px;font-size:15px;color:#1a1e27;line-height:20px;height:20px;-webkit-text-stroke:0.35px #1a1e27;transform:scaleX(1.035);transform-origin:100% 50%;">0.75</div>
<div class="t" style="left:1656.00px;top:685.6px;font-size:10.3px;color:#1a1e27;line-height:20px;height:20px;-webkit-text-stroke:0.25px #1a1e27;transform:scaleX(0.9667);transform-origin:0 50%;">%</div>
<div class="t" style="left:1863.46px;top:683.9px;font-size:15px;color:#d8362c;line-height:20px;height:20px;-webkit-text-stroke:0.35px #d8362c;transform:scaleX(1.035);transform-origin:100% 50%;">-1.02</div>
<div class="t" style="left:1898.00px;top:685.6px;font-size:10.3px;color:#d8362c;line-height:20px;height:20px;-webkit-text-stroke:0.25px #d8362c;transform:scaleX(0.9667);transform-origin:0 50%;">%</div>
<svg style="left:364px;top:685.4px;" width="12" height="16" viewBox="0 0 12 16"><path d="M3.1,2.4 L8.7,8 L3.1,13.6" fill="none" stroke="#858585" stroke-width="1.7" stroke-linecap="round" stroke-linejoin="round"/></svg>
<svg style="left:382.7px;top:684px;" width="20" height="20" viewBox="0 0 20 20"><rect x="2.25" y="4.85" width="15.6" height="10" rx="1.8" fill="none" stroke="#858585" stroke-width="1.5"/><path d="M7.25,4.6 V2.2 A1.4,1.4 0 0 1 8.65,0.8 H11.45 A1.4,1.4 0 0 1 12.85,2.2 V4.6" fill="none" stroke="#858585" stroke-width="1.5"/><path d="M2.4,9 H17.7" stroke="#858585" stroke-width="1.3"/><rect x="8.2" y="9" width="3.7" height="2.3" rx="0.7" fill="#858585"/></svg>
<div class="row" style="top:714px;background:#eeeff1"><div class="a" style="left:45px;top:0;width:1px;height:39px;background:#dbdde1"></div><div class="a" style="left:431px;top:0;width:1px;height:39px;background:#dbdde1"></div><div class="a" style="left:575px;top:0;width:1px;height:39px;background:#dbdde1"></div><div class="a" style="left:699px;top:0;width:1px;height:39px;background:#dbdde1"></div><div class="a" style="left:815px;top:0;width:1px;height:39px;background:#dbdde1"></div><div class="a" style="left:950px;top:0;width:1px;height:39px;background:#dbdde1"></div><div class="a" style="left:1070px;top:0;width:1px;height:39px;background:#dbdde1"></div><div class="a" style="left:1189px;top:0;width:1px;height:39px;background:#dbdde1"></div><div class="a" style="left:1306px;top:0;width:1px;height:39px;background:#dbdde1"></div><div class="a" style="left:1399px;top:0;width:1px;height:39px;background:#dbdde1"></div><div class="a" style="left:1520px;top:0;width:1px;height:39px;background:#dbdde1"></div></div>
<div class="t" style="left:388.99px;top:723.8px;font-size:15px;color:#1a1e27;line-height:20px;height:20px;-webkit-text-stroke:0.4px #1a1e27;transform:scaleX(1.0574);transform-origin:0 50%;">Johnson Household</div>
<div class="t" style="left:751.81px;top:723.8px;font-size:15px;color:#1a1e27;line-height:20px;height:20px;-webkit-text-stroke:0.4px #1a1e27;transform:scaleX(0.9932);transform-origin:0 50%;">Thu Feb 05</div>
<div class="t" style="left:1030.12px;top:723.9px;font-size:15px;color:#1a1e27;line-height:20px;height:20px;-webkit-text-stroke:0.35px #1a1e27;transform:scaleX(1.035);transform-origin:100% 50%;">100.0</div>
<div class="t" style="left:1068.00px;top:725.6px;font-size:10.3px;color:#1a1e27;line-height:20px;height:20px;-webkit-text-stroke:0.25px #1a1e27;transform:scaleX(0.9667);transform-origin:0 50%;">%</div>
<div class="t" style="left:1181.80px;top:723.9px;font-size:15px;color:#1a1e27;line-height:20px;height:20px;-webkit-text-stroke:0.35px #1a1e27;transform:scaleX(1.035);transform-origin:100% 50%;">0.0</div>
<div class="t" style="left:1203.00px;top:725.6px;font-size:10.3px;color:#1a1e27;line-height:20px;height:20px;-webkit-text-stroke:0.25px #1a1e27;transform:scaleX(0.9667);transform-origin:0 50%;">%</div>
<div class="t" style="left:1301.80px;top:723.9px;font-size:15px;color:#1a1e27;line-height:20px;height:20px;-webkit-text-stroke:0.35px #1a1e27;transform:scaleX(1.035);transform-origin:100% 50%;">0.0</div>
<div class="t" style="left:1323.00px;top:725.6px;font-size:10.3px;color:#1a1e27;line-height:20px;height:20px;-webkit-text-stroke:0.25px #1a1e27;transform:scaleX(0.9667);transform-origin:0 50%;">%</div>
<div class="t" style="left:1420.80px;top:723.9px;font-size:15px;color:#1a1e27;line-height:20px;height:20px;-webkit-text-stroke:0.35px #1a1e27;transform:scaleX(1.035);transform-origin:100% 50%;">0.0</div>
<div class="t" style="left:1442.00px;top:725.6px;font-size:10.3px;color:#1a1e27;line-height:20px;height:20px;-webkit-text-stroke:0.25px #1a1e27;transform:scaleX(0.9667);transform-origin:0 50%;">%</div>
<div class="t" style="left:1537.80px;top:723.9px;font-size:15px;color:#1a1e27;line-height:20px;height:20px;-webkit-text-stroke:0.35px #1a1e27;transform:scaleX(1.035);transform-origin:100% 50%;">0.0</div>
<div class="t" style="left:1559.00px;top:725.6px;font-size:10.3px;color:#1a1e27;line-height:20px;height:20px;-webkit-text-stroke:0.25px #1a1e27;transform:scaleX(0.9667);transform-origin:0 50%;">%</div>
<div class="t" style="left:1622.46px;top:723.9px;font-size:15px;color:#1a1e27;line-height:20px;height:20px;-webkit-text-stroke:0.35px #1a1e27;transform:scaleX(1.035);transform-origin:100% 50%;">1.35</div>
<div class="t" style="left:1652.00px;top:725.6px;font-size:10.3px;color:#1a1e27;line-height:20px;height:20px;-webkit-text-stroke:0.25px #1a1e27;transform:scaleX(0.9667);transform-origin:0 50%;">%</div>
<div class="t" style="left:1863.46px;top:723.9px;font-size:15px;color:#d8362c;line-height:20px;height:20px;-webkit-text-stroke:0.35px #d8362c;transform:scaleX(1.035);transform-origin:100% 50%;">-1.31</div>
<div class="t" style="left:1898.00px;top:725.6px;font-size:10.3px;color:#d8362c;line-height:20px;height:20px;-webkit-text-stroke:0.25px #d8362c;transform:scaleX(0.9667);transform-origin:0 50%;">%</div>
<svg style="left:338.1px;top:727.4px;" width="16" height="12" viewBox="0 0 16 12"><path d="M2.4,3.1 L8,8.7 L13.6,3.1" fill="none" stroke="#858585" stroke-width="1.7" stroke-linecap="round" stroke-linejoin="round"/></svg>
<svg style="left:360.8px;top:723px;" width="22" height="22" viewBox="0 0 22 22"><path d="M2,9.3 L10.9,2 L19.8,9.3" fill="none" stroke="#858585" stroke-width="1.5" stroke-linecap="round" stroke-linejoin="round"/><path d="M4.4,8.6 V15.9 A1.6,1.6 0 0 0 6,17.5 H15.8 A1.6,1.6 0 0 0 17.4,15.9 V8.6" fill="none" stroke="#858585" stroke-width="1.5" stroke-linecap="round"/><circle cx="10.9" cy="8.7" r="2.0" fill="#858585"/><path d="M7.1,14.7 C7.1,12.5 8.5,11.6 10.9,11.6 C13.3,11.6 14.7,12.5 14.7,14.7 Z" fill="#858585"/></svg>
<div class="row" style="top:754px;background:#ffffff"><div class="a" style="left:45px;top:0;width:1px;height:39px;background:#dbdde1"></div><div class="a" style="left:431px;top:0;width:1px;height:39px;background:#dbdde1"></div><div class="a" style="left:575px;top:0;width:1px;height:39px;background:#dbdde1"></div><div class="a" style="left:699px;top:0;width:1px;height:39px;background:#dbdde1"></div><div class="a" style="left:815px;top:0;width:1px;height:39px;background:#dbdde1"></div><div class="a" style="left:950px;top:0;width:1px;height:39px;background:#dbdde1"></div><div class="a" style="left:1070px;top:0;width:1px;height:39px;background:#dbdde1"></div><div class="a" style="left:1189px;top:0;width:1px;height:39px;background:#dbdde1"></div><div class="a" style="left:1306px;top:0;width:1px;height:39px;background:#dbdde1"></div><div class="a" style="left:1399px;top:0;width:1px;height:39px;background:#dbdde1"></div><div class="a" style="left:1520px;top:0;width:1px;height:39px;background:#dbdde1"></div><div class="cb "></div></div>
<div class="t" style="left:407.79px;top:763.8px;font-size:15px;color:#1a1e27;line-height:20px;height:20px;-webkit-text-stroke:0.4px #1a1e27;transform:scaleX(1.0669);transform-origin:0 50%;">Brodie Johnson</div>
<div class="t" style="left:751.81px;top:763.8px;font-size:15px;color:#1a1e27;line-height:20px;height:20px;-webkit-text-stroke:0.4px #1a1e27;transform:scaleX(0.9931);transform-origin:0 50%;">Thu Feb 05</div>
<div class="t" style="left:1030.12px;top:763.9px;font-size:15px;color:#1a1e27;line-height:20px;height:20px;-webkit-text-stroke:0.35px #1a1e27;transform:scaleX(1.035);transform-origin:100% 50%;">100.0</div>
<div class="t" style="left:1068.00px;top:765.6px;font-size:10.3px;color:#1a1e27;line-height:20px;height:20px;-webkit-text-stroke:0.25px #1a1e27;transform:scaleX(0.9667);transform-origin:0 50%;">%</div>
<div class="t" style="left:1181.80px;top:763.9px;font-size:15px;color:#1a1e27;line-height:20px;height:20px;-webkit-text-stroke:0.35px #1a1e27;transform:scaleX(1.035);transform-origin:100% 50%;">0.0</div>
<div class="t" style="left:1203.00px;top:765.6px;font-size:10.3px;color:#1a1e27;line-height:20px;height:20px;-webkit-text-stroke:0.25px #1a1e27;transform:scaleX(0.9667);transform-origin:0 50%;">%</div>
<div class="t" style="left:1301.80px;top:763.9px;font-size:15px;color:#1a1e27;line-height:20px;height:20px;-webkit-text-stroke:0.35px #1a1e27;transform:scaleX(1.035);transform-origin:100% 50%;">0.0</div>
<div class="t" style="left:1323.00px;top:765.6px;font-size:10.3px;color:#1a1e27;line-height:20px;height:20px;-webkit-text-stroke:0.25px #1a1e27;transform:scaleX(0.9667);transform-origin:0 50%;">%</div>
<div class="t" style="left:1420.80px;top:763.9px;font-size:15px;color:#1a1e27;line-height:20px;height:20px;-webkit-text-stroke:0.35px #1a1e27;transform:scaleX(1.035);transform-origin:100% 50%;">0.0</div>
<div class="t" style="left:1442.00px;top:765.6px;font-size:10.3px;color:#1a1e27;line-height:20px;height:20px;-webkit-text-stroke:0.25px #1a1e27;transform:scaleX(0.9667);transform-origin:0 50%;">%</div>
<div class="t" style="left:1537.80px;top:763.9px;font-size:15px;color:#1a1e27;line-height:20px;height:20px;-webkit-text-stroke:0.35px #1a1e27;transform:scaleX(1.035);transform-origin:100% 50%;">0.0</div>
<div class="t" style="left:1559.00px;top:765.6px;font-size:10.3px;color:#1a1e27;line-height:20px;height:20px;-webkit-text-stroke:0.25px #1a1e27;transform:scaleX(0.9667);transform-origin:0 50%;">%</div>
<div class="t" style="left:1626.46px;top:763.9px;font-size:15px;color:#1a1e27;line-height:20px;height:20px;-webkit-text-stroke:0.35px #1a1e27;transform:scaleX(1.035);transform-origin:100% 50%;">1.35</div>
<div class="t" style="left:1656.00px;top:765.6px;font-size:10.3px;color:#1a1e27;line-height:20px;height:20px;-webkit-text-stroke:0.25px #1a1e27;transform:scaleX(0.9667);transform-origin:0 50%;">%</div>
<div class="t" style="left:1863.46px;top:763.9px;font-size:15px;color:#d8362c;line-height:20px;height:20px;-webkit-text-stroke:0.35px #d8362c;transform:scaleX(1.035);transform-origin:100% 50%;">-1.31</div>
<div class="t" style="left:1898.00px;top:765.6px;font-size:10.3px;color:#d8362c;line-height:20px;height:20px;-webkit-text-stroke:0.25px #d8362c;transform:scaleX(0.9667);transform-origin:0 50%;">%</div>
<svg style="left:364px;top:765.4px;" width="12" height="16" viewBox="0 0 12 16"><path d="M3.1,2.4 L8.7,8 L3.1,13.6" fill="none" stroke="#858585" stroke-width="1.7" stroke-linecap="round" stroke-linejoin="round"/></svg>
<svg style="left:382.7px;top:764px;" width="20" height="20" viewBox="0 0 20 20"><rect x="2.25" y="4.85" width="15.6" height="10" rx="1.8" fill="none" stroke="#858585" stroke-width="1.5"/><path d="M7.25,4.6 V2.2 A1.4,1.4 0 0 1 8.65,0.8 H11.45 A1.4,1.4 0 0 1 12.85,2.2 V4.6" fill="none" stroke="#858585" stroke-width="1.5"/><path d="M2.4,9 H17.7" stroke="#858585" stroke-width="1.3"/><rect x="8.2" y="9" width="3.7" height="2.3" rx="0.7" fill="#858585"/></svg>
<div class="row" style="top:794px;background:#eeeff1"><div class="a" style="left:45px;top:0;width:1px;height:39px;background:#dbdde1"></div><div class="a" style="left:431px;top:0;width:1px;height:39px;background:#dbdde1"></div><div class="a" style="left:575px;top:0;width:1px;height:39px;background:#dbdde1"></div><div class="a" style="left:699px;top:0;width:1px;height:39px;background:#dbdde1"></div><div class="a" style="left:815px;top:0;width:1px;height:39px;background:#dbdde1"></div><div class="a" style="left:950px;top:0;width:1px;height:39px;background:#dbdde1"></div><div class="a" style="left:1070px;top:0;width:1px;height:39px;background:#dbdde1"></div><div class="a" style="left:1189px;top:0;width:1px;height:39px;background:#dbdde1"></div><div class="a" style="left:1306px;top:0;width:1px;height:39px;background:#dbdde1"></div><div class="a" style="left:1399px;top:0;width:1px;height:39px;background:#dbdde1"></div><div class="a" style="left:1520px;top:0;width:1px;height:39px;background:#dbdde1"></div></div>
<div class="t" style="left:388.98px;top:803.8px;font-size:15px;color:#1a1e27;line-height:20px;height:20px;-webkit-text-stroke:0.4px #1a1e27;transform:scaleX(1.0420);transform-origin:0 50%;">John Brown Household</div>
<div class="t" style="left:751.81px;top:803.8px;font-size:15px;color:#1a1e27;line-height:20px;height:20px;-webkit-text-stroke:0.4px #1a1e27;transform:scaleX(0.9932);transform-origin:0 50%;">Thu Feb 05</div>
<div class="t" style="left:1038.46px;top:803.9px;font-size:15px;color:#1a1e27;line-height:20px;height:20px;-webkit-text-stroke:0.35px #1a1e27;transform:scaleX(1.035);transform-origin:100% 50%;">98.9</div>
<div class="t" style="left:1068.00px;top:805.6px;font-size:10.3px;color:#1a1e27;line-height:20px;height:20px;-webkit-text-stroke:0.25px #1a1e27;transform:scaleX(0.9667);transform-origin:0 50%;">%</div>
<div class="t" style="left:1181.80px;top:803.9px;font-size:15px;color:#1a1e27;line-height:20px;height:20px;-webkit-text-stroke:0.35px #1a1e27;transform:scaleX(1.035);transform-origin:100% 50%;">0.7</div>
<div class="t" style="left:1203.00px;top:805.6px;font-size:10.3px;color:#1a1e27;line-height:20px;height:20px;-webkit-text-stroke:0.25px #1a1e27;transform:scaleX(0.9667);transform-origin:0 50%;">%</div>
<div class="t" style="left:1301.80px;top:803.9px;font-size:15px;color:#1a1e27;line-height:20px;height:20px;-webkit-text-stroke:0.35px #1a1e27;transform:scaleX(1.035);transform-origin:100% 50%;">0.4</div>
<div class="t" style="left:1323.00px;top:805.6px;font-size:10.3px;color:#1a1e27;line-height:20px;height:20px;-webkit-text-stroke:0.25px #1a1e27;transform:scaleX(0.9667);transform-origin:0 50%;">%</div>
<div class="t" style="left:1420.80px;top:803.9px;font-size:15px;color:#1a1e27;line-height:20px;height:20px;-webkit-text-stroke:0.35px #1a1e27;transform:scaleX(1.035);transform-origin:100% 50%;">0.0</div>
<div class="t" style="left:1442.00px;top:805.6px;font-size:10.3px;color:#1a1e27;line-height:20px;height:20px;-webkit-text-stroke:0.25px #1a1e27;transform:scaleX(0.9667);transform-origin:0 50%;">%</div>
<div class="t" style="left:1537.80px;top:803.9px;font-size:15px;color:#1a1e27;line-height:20px;height:20px;-webkit-text-stroke:0.35px #1a1e27;transform:scaleX(1.035);transform-origin:100% 50%;">0.0</div>
<div class="t" style="left:1559.00px;top:805.6px;font-size:10.3px;color:#1a1e27;line-height:20px;height:20px;-webkit-text-stroke:0.25px #1a1e27;transform:scaleX(0.9667);transform-origin:0 50%;">%</div>
<div class="t" style="left:1622.46px;top:803.9px;font-size:15px;color:#1a1e27;line-height:20px;height:20px;-webkit-text-stroke:0.35px #1a1e27;transform:scaleX(1.035);transform-origin:100% 50%;">0.72</div>
<div class="t" style="left:1652.00px;top:805.6px;font-size:10.3px;color:#1a1e27;line-height:20px;height:20px;-webkit-text-stroke:0.25px #1a1e27;transform:scaleX(0.9667);transform-origin:0 50%;">%</div>
<div class="t" style="left:1863.46px;top:803.9px;font-size:15px;color:#d8362c;line-height:20px;height:20px;-webkit-text-stroke:0.35px #d8362c;transform:scaleX(1.035);transform-origin:100% 50%;">-2.93</div>
<div class="t" style="left:1898.00px;top:805.6px;font-size:10.3px;color:#d8362c;line-height:20px;height:20px;-webkit-text-stroke:0.25px #d8362c;transform:scaleX(0.9667);transform-origin:0 50%;">%</div>
<svg style="left:341px;top:805.4px;" width="12" height="16" viewBox="0 0 12 16"><path d="M3.1,2.4 L8.7,8 L3.1,13.6" fill="none" stroke="#858585" stroke-width="1.7" stroke-linecap="round" stroke-linejoin="round"/></svg>
<svg style="left:360.8px;top:803px;" width="22" height="22" viewBox="0 0 22 22"><path d="M2,9.3 L10.9,2 L19.8,9.3" fill="none" stroke="#858585" stroke-width="1.5" stroke-linecap="round" stroke-linejoin="round"/><path d="M4.4,8.6 V15.9 A1.6,1.6 0 0 0 6,17.5 H15.8 A1.6,1.6 0 0 0 17.4,15.9 V8.6" fill="none" stroke="#858585" stroke-width="1.5" stroke-linecap="round"/><circle cx="10.9" cy="8.7" r="2.0" fill="#858585"/><path d="M7.1,14.7 C7.1,12.5 8.5,11.6 10.9,11.6 C13.3,11.6 14.7,12.5 14.7,14.7 Z" fill="#858585"/></svg>
<div class="row" style="top:834px;background:#eeeff1"><div class="a" style="left:45px;top:0;width:1px;height:39px;background:#dbdde1"></div><div class="a" style="left:431px;top:0;width:1px;height:39px;background:#dbdde1"></div><div class="a" style="left:575px;top:0;width:1px;height:39px;background:#dbdde1"></div><div class="a" style="left:699px;top:0;width:1px;height:39px;background:#dbdde1"></div><div class="a" style="left:815px;top:0;width:1px;height:39px;background:#dbdde1"></div><div class="a" style="left:950px;top:0;width:1px;height:39px;background:#dbdde1"></div><div class="a" style="left:1070px;top:0;width:1px;height:39px;background:#dbdde1"></div><div class="a" style="left:1189px;top:0;width:1px;height:39px;background:#dbdde1"></div><div class="a" style="left:1306px;top:0;width:1px;height:39px;background:#dbdde1"></div><div class="a" style="left:1399px;top:0;width:1px;height:39px;background:#dbdde1"></div><div class="a" style="left:1520px;top:0;width:1px;height:39px;background:#dbdde1"></div></div>
<div class="t" style="left:364.46px;top:843.8px;font-size:15px;color:#1a1e27;line-height:20px;height:20px;-webkit-text-stroke:0.4px #1a1e27;transform:scaleX(1.0418);transform-origin:0 50%;">No Households</div>
<svg style="left:338.1px;top:847.4px;" width="16" height="12" viewBox="0 0 16 12"><path d="M2.4,3.1 L8,8.7 L13.6,3.1" fill="none" stroke="#858585" stroke-width="1.7" stroke-linecap="round" stroke-linejoin="round"/></svg>
<div class="row" style="top:874px;background:#ffffff"><div class="a" style="left:45px;top:0;width:1px;height:39px;background:#dbdde1"></div><div class="a" style="left:431px;top:0;width:1px;height:39px;background:#dbdde1"></div><div class="a" style="left:575px;top:0;width:1px;height:39px;background:#dbdde1"></div><div class="a" style="left:699px;top:0;width:1px;height:39px;background:#dbdde1"></div><div class="a" style="left:815px;top:0;width:1px;height:39px;background:#dbdde1"></div><div class="a" style="left:950px;top:0;width:1px;height:39px;background:#dbdde1"></div><div class="a" style="left:1070px;top:0;width:1px;height:39px;background:#dbdde1"></div><div class="a" style="left:1189px;top:0;width:1px;height:39px;background:#dbdde1"></div><div class="a" style="left:1306px;top:0;width:1px;height:39px;background:#dbdde1"></div><div class="a" style="left:1399px;top:0;width:1px;height:39px;background:#dbdde1"></div><div class="a" style="left:1520px;top:0;width:1px;height:39px;background:#dbdde1"></div><div class="cb "></div></div>
<div class="t" style="left:407.81px;top:883.8px;font-size:15px;color:#1a1e27;line-height:20px;height:20px;-webkit-text-stroke:0.4px #1a1e27;transform:scaleX(1.0854);transform-origin:0 50%;">Untitled Portfolio</div>
<div class="t" style="left:751.81px;top:883.8px;font-size:15px;color:#1a1e27;line-height:20px;height:20px;-webkit-text-stroke:0.4px #1a1e27;transform:scaleX(0.9931);transform-origin:0 50%;">Thu Feb 05</div>
<div class="t" style="left:1038.46px;top:883.9px;font-size:15px;color:#1a1e27;line-height:20px;height:20px;-webkit-text-stroke:0.35px #1a1e27;transform:scaleX(1.035);transform-origin:100% 50%;">32.4</div>
<div class="t" style="left:1068.00px;top:885.6px;font-size:10.3px;color:#1a1e27;line-height:20px;height:20px;-webkit-text-stroke:0.25px #1a1e27;transform:scaleX(0.9667);transform-origin:0 50%;">%</div>
<div class="t" style="left:1173.46px;top:883.9px;font-size:15px;color:#1a1e27;line-height:20px;height:20px;-webkit-text-stroke:0.35px #1a1e27;transform:scaleX(1.035);transform-origin:100% 50%;">18.7</div>
<div class="t" style="left:1203.00px;top:885.6px;font-size:10.3px;color:#1a1e27;line-height:20px;height:20px;-webkit-text-stroke:0.25px #1a1e27;transform:scaleX(0.9667);transform-origin:0 50%;">%</div>
<div class="t" style="left:1293.46px;top:883.9px;font-size:15px;color:#1a1e27;line-height:20px;height:20px;-webkit-text-stroke:0.35px #1a1e27;transform:scaleX(1.035);transform-origin:100% 50%;">48.8</div>
<div class="t" style="left:1323.00px;top:885.6px;font-size:10.3px;color:#1a1e27;line-height:20px;height:20px;-webkit-text-stroke:0.25px #1a1e27;transform:scaleX(0.9667);transform-origin:0 50%;">%</div>
<div class="t" style="left:1420.80px;top:883.9px;font-size:15px;color:#1a1e27;line-height:20px;height:20px;-webkit-text-stroke:0.35px #1a1e27;transform:scaleX(1.035);transform-origin:100% 50%;">0.0</div>
<div class="t" style="left:1442.00px;top:885.6px;font-size:10.3px;color:#1a1e27;line-height:20px;height:20px;-webkit-text-stroke:0.25px #1a1e27;transform:scaleX(0.9667);transform-origin:0 50%;">%</div>
<div class="t" style="left:1537.80px;top:883.9px;font-size:15px;color:#1a1e27;line-height:20px;height:20px;-webkit-text-stroke:0.35px #1a1e27;transform:scaleX(1.035);transform-origin:100% 50%;">0.0</div>
<div class="t" style="left:1559.00px;top:885.6px;font-size:10.3px;color:#1a1e27;line-height:20px;height:20px;-webkit-text-stroke:0.25px #1a1e27;transform:scaleX(0.9667);transform-origin:0 50%;">%</div>
<div class="t" style="left:1626.46px;top:883.9px;font-size:15px;color:#1a1e27;line-height:20px;height:20px;-webkit-text-stroke:0.35px #1a1e27;transform:scaleX(1.035);transform-origin:100% 50%;">0.88</div>
<div class="t" style="left:1656.00px;top:885.6px;font-size:10.3px;color:#1a1e27;line-height:20px;height:20px;-webkit-text-stroke:0.25px #1a1e27;transform:scaleX(0.9667);transform-origin:0 50%;">%</div>
<div class="t" style="left:1863.46px;top:883.9px;font-size:15px;color:#d8362c;line-height:20px;height:20px;-webkit-text-stroke:0.35px #d8362c;transform:scaleX(1.035);transform-origin:100% 50%;">-0.30</div>
<div class="t" style="left:1898.00px;top:885.6px;font-size:10.3px;color:#d8362c;line-height:20px;height:20px;-webkit-text-stroke:0.25px #d8362c;transform:scaleX(0.9667);transform-origin:0 50%;">%</div>
<svg style="left:364px;top:885.4px;" width="12" height="16" viewBox="0 0 12 16"><path d="M3.1,2.4 L8.7,8 L3.1,13.6" fill="none" stroke="#858585" stroke-width="1.7" stroke-linecap="round" stroke-linejoin="round"/></svg>
<svg style="left:382.7px;top:884px;" width="20" height="20" viewBox="0 0 20 20"><rect x="2.25" y="4.85" width="15.6" height="10" rx="1.8" fill="none" stroke="#858585" stroke-width="1.5"/><path d="M7.25,4.6 V2.2 A1.4,1.4 0 0 1 8.65,0.8 H11.45 A1.4,1.4 0 0 1 12.85,2.2 V4.6" fill="none" stroke="#858585" stroke-width="1.5"/><path d="M2.4,9 H17.7" stroke="#858585" stroke-width="1.3"/><rect x="8.2" y="9" width="3.7" height="2.3" rx="0.7" fill="#858585"/></svg>
<div class="row" style="top:914px;background:#ffffff"><div class="a" style="left:45px;top:0;width:1px;height:39px;background:#dbdde1"></div><div class="a" style="left:431px;top:0;width:1px;height:39px;background:#dbdde1"></div><div class="a" style="left:575px;top:0;width:1px;height:39px;background:#dbdde1"></div><div class="a" style="left:699px;top:0;width:1px;height:39px;background:#dbdde1"></div><div class="a" style="left:815px;top:0;width:1px;height:39px;background:#dbdde1"></div><div class="a" style="left:950px;top:0;width:1px;height:39px;background:#dbdde1"></div><div class="a" style="left:1070px;top:0;width:1px;height:39px;background:#dbdde1"></div><div class="a" style="left:1189px;top:0;width:1px;height:39px;background:#dbdde1"></div><div class="a" style="left:1306px;top:0;width:1px;height:39px;background:#dbdde1"></div><div class="a" style="left:1399px;top:0;width:1px;height:39px;background:#dbdde1"></div><div class="a" style="left:1520px;top:0;width:1px;height:39px;background:#dbdde1"></div><div class="cb "></div></div>
<div class="t" style="left:407.81px;top:923.8px;font-size:15px;color:#1a1e27;line-height:20px;height:20px;-webkit-text-stroke:0.4px #1a1e27;transform:scaleX(1.0854);transform-origin:0 50%;">Untitled Portfolio</div>
<div class="t" style="left:751.81px;top:923.8px;font-size:15px;color:#1a1e27;line-height:20px;height:20px;-webkit-text-stroke:0.4px #1a1e27;transform:scaleX(0.9931);transform-origin:0 50%;">Thu Feb 05</div>
<div class="t" style="left:1030.12px;top:923.9px;font-size:15px;color:#1a1e27;line-height:20px;height:20px;-webkit-text-stroke:0.35px #1a1e27;transform:scaleX(1.035);transform-origin:100% 50%;">100.0</div>
<div class="t" style="left:1068.00px;top:925.6px;font-size:10.3px;color:#1a1e27;line-height:20px;height:20px;-webkit-text-stroke:0.25px #1a1e27;transform:scaleX(0.9667);transform-origin:0 50%;">%</div>
<div class="t" style="left:1181.80px;top:923.9px;font-size:15px;color:#1a1e27;line-height:20px;height:20px;-webkit-text-stroke:0.35px #1a1e27;transform:scaleX(1.035);transform-origin:100% 50%;">0.0</div>
<div class="t" style="left:1203.00px;top:925.6px;font-size:10.3px;color:#1a1e27;line-height:20px;height:20px;-webkit-text-stroke:0.25px #1a1e27;transform:scaleX(0.9667);transform-origin:0 50%;">%</div>
<div class="t" style="left:1301.80px;top:923.9px;font-size:15px;color:#1a1e27;line-height:20px;height:20px;-webkit-text-stroke:0.35px #1a1e27;transform:scaleX(1.035);transform-origin:100% 50%;">0.0</div>
<div class="t" style="left:1323.00px;top:925.6px;font-size:10.3px;color:#1a1e27;line-height:20px;height:20px;-webkit-text-stroke:0.25px #1a1e27;transform:scaleX(0.9667);transform-origin:0 50%;">%</div>
<div class="t" style="left:1420.80px;top:923.9px;font-size:15px;color:#1a1e27;line-height:20px;height:20px;-webkit-text-stroke:0.35px #1a1e27;transform:scaleX(1.035);transform-origin:100% 50%;">0.0</div>
<div class="t" style="left:1442.00px;top:925.6px;font-size:10.3px;color:#1a1e27;line-height:20px;height:20px;-webkit-text-stroke:0.25px #1a1e27;transform:scaleX(0.9667);transform-origin:0 50%;">%</div>
<div class="t" style="left:1537.80px;top:923.9px;font-size:15px;color:#1a1e27;line-height:20px;height:20px;-webkit-text-stroke:0.35px #1a1e27;transform:scaleX(1.035);transform-origin:100% 50%;">0.0</div>
<div class="t" style="left:1559.00px;top:925.6px;font-size:10.3px;color:#1a1e27;line-height:20px;height:20px;-webkit-text-stroke:0.25px #1a1e27;transform:scaleX(0.9667);transform-origin:0 50%;">%</div>
<div class="t" style="left:1626.46px;top:923.9px;font-size:15px;color:#1a1e27;line-height:20px;height:20px;-webkit-text-stroke:0.35px #1a1e27;transform:scaleX(1.035);transform-origin:100% 50%;">0.97</div>
<div class="t" style="left:1656.00px;top:925.6px;font-size:10.3px;color:#1a1e27;line-height:20px;height:20px;-webkit-text-stroke:0.25px #1a1e27;transform:scaleX(0.9667);transform-origin:0 50%;">%</div>
<div class="t" style="left:1863.46px;top:923.9px;font-size:15px;color:#d8362c;line-height:20px;height:20px;-webkit-text-stroke:0.35px #d8362c;transform:scaleX(1.035);transform-origin:100% 50%;">-3.87</div>
<div class="t" style="left:1898.00px;top:925.6px;font-size:10.3px;color:#d8362c;line-height:20px;height:20px;-webkit-text-stroke:0.25px #d8362c;transform:scaleX(0.9667);transform-origin:0 50%;">%</div>
<svg style="left:364px;top:925.4px;" width="12" height="16" viewBox="0 0 12 16"><path d="M3.1,2.4 L8.7,8 L3.1,13.6" fill="none" stroke="#858585" stroke-width="1.7" stroke-linecap="round" stroke-linejoin="round"/></svg>
<svg style="left:382.7px;top:924px;" width="20" height="20" viewBox="0 0 20 20"><rect x="2.25" y="4.85" width="15.6" height="10" rx="1.8" fill="none" stroke="#858585" stroke-width="1.5"/><path d="M7.25,4.6 V2.2 A1.4,1.4 0 0 1 8.65,0.8 H11.45 A1.4,1.4 0 0 1 12.85,2.2 V4.6" fill="none" stroke="#858585" stroke-width="1.5"/><path d="M2.4,9 H17.7" stroke="#858585" stroke-width="1.3"/><rect x="8.2" y="9" width="3.7" height="2.3" rx="0.7" fill="#858585"/></svg>
<svg style="left:0;top:0" width="2000" height="1250" viewBox="0 0 2000 1250"><defs><clipPath id="g0"><rect x="1680" y="314" width="120" height="19.3"/></clipPath><clipPath id="r0"><rect x="1680" y="333.3" width="120" height="20.7"/></clipPath><clipPath id="g1"><rect x="1680" y="354" width="120" height="18.7"/></clipPath><clipPath id="r1"><rect x="1680" y="372.7" width="120" height="21.3"/></clipPath><clipPath id="g2"><rect x="1680" y="394" width="120" height="18.3"/></clipPath><clipPath id="r2"><rect x="1680" y="412.3" width="120" height="21.7"/></clipPath><clipPath id="g3"><rect x="1680" y="434" width="120" height="21.1"/></clipPath><clipPath id="r3"><rect x="1680" y="455.1" width="120" height="18.9"/></clipPath><clipPath id="g4"><rect x="1680" y="474" width="120" height="19.1"/></clipPath><clipPath id="r4"><rect x="1680" y="493.1" width="120" height="20.9"/></clipPath><clipPath id="g5"><rect x="1680" y="514" width="120" height="22.7"/></clipPath><clipPath id="r5"><rect x="1680" y="536.7" width="120" height="17.3"/></clipPath><clipPath id="g6"><rect x="1680" y="554" width="120" height="20.0"/></clipPath><clipPath id="r6"><rect x="1680" y="574.0" width="120" height="20.0"/></clipPath><clipPath id="g7"><rect x="1680" y="594" width="120" height="20.9"/></clipPath><clipPath id="r7"><rect x="1680" y="614.9" width="120" height="19.1"/></clipPath><clipPath id="g10"><rect x="1680" y="714" width="120" height="24.0"/></clipPath><clipPath id="r10"><rect x="1680" y="738.0" width="120" height="16.0"/></clipPath><clipPath id="g11"><rect x="1680" y="754" width="120" height="23.1"/></clipPath><clipPath id="r11"><rect x="1680" y="777.1" width="120" height="16.9"/></clipPath><clipPath id="g12"><rect x="1680" y="794" width="120" height="20.7"/></clipPath><clipPath id="r12"><rect x="1680" y="814.7" width="120" height="19.3"/></clipPath><clipPath id="g14"><rect x="1680" y="874" width="120" height="125.0"/></clipPath><clipPath id="r14"><rect x="1680" y="999.0" width="120" height="-85.0"/></clipPath><clipPath id="g15"><rect x="1680" y="914" width="120" height="85.0"/></clipPath><clipPath id="r15"><rect x="1680" y="999.0" width="120" height="-45.0"/></clipPath><clipPath id="g8"><rect x="1680" y="634" width="120" height="18.7"/></clipPath><clipPath id="r8"><rect x="1680" y="652.7" width="120" height="21.3"/></clipPath><clipPath id="g9"><rect x="1680" y="674" width="120" height="18.7"/></clipPath><clipPath id="r9"><rect x="1680" y="692.7" width="120" height="21.3"/></clipPath></defs><path d="M1698.2,333.2 C1699.2,332.5 1701.2,329.8 1703.7,329.1 C1706.2,328.4 1709.1,329.6 1712.0,329.1 C1714.9,328.6 1717.4,326.9 1719.7,326.4 C1722.0,325.9 1723.2,326.2 1724.8,326.4 C1726.4,326.6 1726.9,327.4 1728.6,327.7 C1730.3,328.0 1732.9,327.8 1734.4,328.3 C1735.9,328.8 1736.3,329.5 1737.0,330.4 C1737.7,331.3 1737.6,331.9 1738.2,333.2 C1738.8,334.5 1739.0,337.7 1740.5,337.7 C1742.0,337.7 1744.2,334.6 1746.6,333.2 C1749.0,331.8 1751.4,331.1 1753.6,330.0 C1755.8,328.9 1757.2,327.8 1758.7,327.2 C1760.2,326.6 1760.9,326.1 1762.2,326.8 C1763.5,327.5 1764.6,329.8 1765.8,331.0 C1767.0,332.2 1767.4,332.7 1769.0,333.2 C1770.6,333.7 1772.3,332.4 1774.7,333.6 C1777.1,334.8 1781.0,338.8 1782.4,340.0" fill="none" stroke="#2b972f" stroke-width="1.5" stroke-linejoin="round" clip-path="url(#g0)"/><path d="M1698.2,333.2 C1699.2,332.5 1701.2,329.8 1703.7,329.1 C1706.2,328.4 1709.1,329.6 1712.0,329.1 C1714.9,328.6 1717.4,326.9 1719.7,326.4 C1722.0,325.9 1723.2,326.2 1724.8,326.4 C1726.4,326.6 1726.9,327.4 1728.6,327.7 C1730.3,328.0 1732.9,327.8 1734.4,328.3 C1735.9,328.8 1736.3,329.5 1737.0,330.4 C1737.7,331.3 1737.6,331.9 1738.2,333.2 C1738.8,334.5 1739.0,337.7 1740.5,337.7 C1742.0,337.7 1744.2,334.6 1746.6,333.2 C1749.0,331.8 1751.4,331.1 1753.6,330.0 C1755.8,328.9 1757.2,327.8 1758.7,327.2 C1760.2,326.6 1760.9,326.1 1762.2,326.8 C1763.5,327.5 1764.6,329.8 1765.8,331.0 C1767.0,332.2 1767.4,332.7 1769.0,333.2 C1770.6,333.7 1772.3,332.4 1774.7,333.6 C1777.1,334.8 1781.0,338.8 1782.4,340.0" fill="none" stroke="#f6715a" stroke-width="1.5" stroke-linejoin="round" clip-path="url(#r0)"/><path d="M1718.4,372.6 C1719.1,372.2 1720.1,371.1 1722.2,370.6 C1724.3,370.1 1727.7,370.4 1729.9,369.9 C1732.1,369.4 1733.0,368.3 1734.4,368.0 C1735.8,367.7 1736.3,367.7 1737.6,368.0 C1738.9,368.3 1739.8,369.3 1741.4,369.9 C1743.0,370.5 1745.3,370.6 1746.6,371.1 C1747.9,371.6 1747.9,371.3 1748.8,372.6 C1749.7,373.9 1749.9,378.4 1751.7,378.4 C1753.5,378.4 1756.3,374.4 1758.7,372.6 C1761.1,370.8 1763.4,369.4 1765.1,368.6 C1766.8,367.8 1767.0,367.4 1768.3,368.2 C1769.6,369.0 1771.2,371.9 1772.2,372.9 C1773.2,373.9 1773.0,373.8 1774.1,373.9 C1775.2,374.0 1776.9,372.9 1778.2,373.2 C1779.5,373.5 1780.0,375.1 1781.1,375.8 C1782.2,376.5 1783.7,376.8 1784.3,377.0" fill="none" stroke="#2b972f" stroke-width="1.2" stroke-linejoin="round" clip-path="url(#g1)"/><path d="M1718.4,372.6 C1719.1,372.2 1720.1,371.1 1722.2,370.6 C1724.3,370.1 1727.7,370.4 1729.9,369.9 C1732.1,369.4 1733.0,368.3 1734.4,368.0 C1735.8,367.7 1736.3,367.7 1737.6,368.0 C1738.9,368.3 1739.8,369.3 1741.4,369.9 C1743.0,370.5 1745.3,370.6 1746.6,371.1 C1747.9,371.6 1747.9,371.3 1748.8,372.6 C1749.7,373.9 1749.9,378.4 1751.7,378.4 C1753.5,378.4 1756.3,374.4 1758.7,372.6 C1761.1,370.8 1763.4,369.4 1765.1,368.6 C1766.8,367.8 1767.0,367.4 1768.3,368.2 C1769.6,369.0 1771.2,371.9 1772.2,372.9 C1773.2,373.9 1773.0,373.8 1774.1,373.9 C1775.2,374.0 1776.9,372.9 1778.2,373.2 C1779.5,373.5 1780.0,375.1 1781.1,375.8 C1782.2,376.5 1783.7,376.8 1784.3,377.0" fill="none" stroke="#f6715a" stroke-width="1.2" stroke-linejoin="round" clip-path="url(#r1)"/><path d="M1698.2,412.2 C1699.0,411.8 1699.9,410.4 1702.4,409.8 C1704.9,409.2 1709.1,409.4 1712.0,408.8 C1714.9,408.2 1716.6,406.8 1718.4,406.4 C1720.2,406.0 1720.4,405.7 1722.2,406.4 C1724.0,407.1 1726.4,409.6 1728.6,410.4 C1730.8,411.2 1733.0,410.7 1734.4,411.0 C1735.8,411.3 1735.4,410.7 1736.6,412.2 C1737.8,413.7 1738.1,419.3 1740.8,419.3 C1743.5,419.3 1748.2,414.4 1751.4,412.2 C1754.6,410.0 1756.7,408.1 1758.7,407.2 C1760.7,406.3 1761.3,406.3 1762.6,407.2 C1763.9,408.1 1764.8,411.0 1766.1,412.2 C1767.4,413.4 1768.1,414.0 1769.6,414.1 C1771.1,414.2 1772.8,412.3 1774.4,412.6 C1776.0,412.9 1777.2,414.6 1778.6,415.5 C1780.0,416.4 1781.7,417.1 1782.4,417.5" fill="none" stroke="#2b972f" stroke-width="1.5" stroke-linejoin="round" clip-path="url(#g2)"/><path d="M1698.2,412.2 C1699.0,411.8 1699.9,410.4 1702.4,409.8 C1704.9,409.2 1709.1,409.4 1712.0,408.8 C1714.9,408.2 1716.6,406.8 1718.4,406.4 C1720.2,406.0 1720.4,405.7 1722.2,406.4 C1724.0,407.1 1726.4,409.6 1728.6,410.4 C1730.8,411.2 1733.0,410.7 1734.4,411.0 C1735.8,411.3 1735.4,410.7 1736.6,412.2 C1737.8,413.7 1738.1,419.3 1740.8,419.3 C1743.5,419.3 1748.2,414.4 1751.4,412.2 C1754.6,410.0 1756.7,408.1 1758.7,407.2 C1760.7,406.3 1761.3,406.3 1762.6,407.2 C1763.9,408.1 1764.8,411.0 1766.1,412.2 C1767.4,413.4 1768.1,414.0 1769.6,414.1 C1771.1,414.2 1772.8,412.3 1774.4,412.6 C1776.0,412.9 1777.2,414.6 1778.6,415.5 C1780.0,416.4 1781.7,417.1 1782.4,417.5" fill="none" stroke="#f6715a" stroke-width="1.5" stroke-linejoin="round" clip-path="url(#r2)"/><path d="M1698.2,454.8 C1698.8,454.4 1700.5,452.9 1701.8,452.6 C1703.1,452.3 1704.2,453.6 1705.6,453.2 C1707.0,452.8 1708.0,450.5 1709.4,450.4 C1710.8,450.3 1711.9,452.9 1713.3,452.9 C1714.7,452.9 1715.8,450.5 1717.4,450.2 C1719.0,449.9 1719.7,451.7 1722.2,451.0 C1724.7,450.3 1729.0,447.0 1731.2,446.5 C1733.4,446.0 1733.1,446.5 1734.4,448.1 C1735.7,449.7 1737.1,453.2 1738.2,455.2 C1739.3,457.2 1739.6,459.3 1740.5,459.3 C1741.4,459.3 1740.7,457.5 1743.4,455.2 C1746.1,452.9 1752.6,447.7 1755.5,446.7 C1758.4,445.7 1757.4,448.8 1759.4,449.4 C1761.4,450.0 1764.0,449.2 1766.4,450.2 C1768.8,451.2 1770.7,454.0 1772.8,455.2 C1774.9,456.4 1776.2,455.9 1777.9,456.6 C1779.6,457.3 1781.6,458.7 1782.4,459.1" fill="none" stroke="#2b972f" stroke-width="1.5" stroke-linejoin="round" clip-path="url(#g3)"/><path d="M1698.2,454.8 C1698.8,454.4 1700.5,452.9 1701.8,452.6 C1703.1,452.3 1704.2,453.6 1705.6,453.2 C1707.0,452.8 1708.0,450.5 1709.4,450.4 C1710.8,450.3 1711.9,452.9 1713.3,452.9 C1714.7,452.9 1715.8,450.5 1717.4,450.2 C1719.0,449.9 1719.7,451.7 1722.2,451.0 C1724.7,450.3 1729.0,447.0 1731.2,446.5 C1733.4,446.0 1733.1,446.5 1734.4,448.1 C1735.7,449.7 1737.1,453.2 1738.2,455.2 C1739.3,457.2 1739.6,459.3 1740.5,459.3 C1741.4,459.3 1740.7,457.5 1743.4,455.2 C1746.1,452.9 1752.6,447.7 1755.5,446.7 C1758.4,445.7 1757.4,448.8 1759.4,449.4 C1761.4,450.0 1764.0,449.2 1766.4,450.2 C1768.8,451.2 1770.7,454.0 1772.8,455.2 C1774.9,456.4 1776.2,455.9 1777.9,456.6 C1779.6,457.3 1781.6,458.7 1782.4,459.1" fill="none" stroke="#f6715a" stroke-width="1.5" stroke-linejoin="round" clip-path="url(#r3)"/><path d="M1718.4,493.2 C1719.3,492.5 1721.8,489.9 1723.5,489.4 C1725.2,488.9 1724.8,490.7 1728.0,490.5 C1731.2,490.3 1737.9,488.5 1741.4,488.1 C1744.9,487.7 1745.8,487.5 1747.5,488.4 C1749.2,489.3 1750.2,492.0 1751.0,493.0 C1751.8,494.0 1751.4,493.8 1752.0,493.7 C1752.6,493.6 1752.3,492.8 1754.2,492.3 C1756.1,491.8 1760.1,491.6 1762.6,491.1 C1765.1,490.7 1766.6,489.6 1768.3,489.8 C1770.0,490.0 1771.0,491.7 1772.2,492.3 C1773.4,492.9 1773.3,492.6 1774.7,493.2 C1776.1,493.8 1778.1,494.8 1779.8,495.8 C1781.5,496.8 1783.2,498.3 1784.0,498.8" fill="none" stroke="#2b972f" stroke-width="1.2" stroke-linejoin="round" clip-path="url(#g4)"/><path d="M1718.4,493.2 C1719.3,492.5 1721.8,489.9 1723.5,489.4 C1725.2,488.9 1724.8,490.7 1728.0,490.5 C1731.2,490.3 1737.9,488.5 1741.4,488.1 C1744.9,487.7 1745.8,487.5 1747.5,488.4 C1749.2,489.3 1750.2,492.0 1751.0,493.0 C1751.8,494.0 1751.4,493.8 1752.0,493.7 C1752.6,493.6 1752.3,492.8 1754.2,492.3 C1756.1,491.8 1760.1,491.6 1762.6,491.1 C1765.1,490.7 1766.6,489.6 1768.3,489.8 C1770.0,490.0 1771.0,491.7 1772.2,492.3 C1773.4,492.9 1773.3,492.6 1774.7,493.2 C1776.1,493.8 1778.1,494.8 1779.8,495.8 C1781.5,496.8 1783.2,498.3 1784.0,498.8" fill="none" stroke="#f6715a" stroke-width="1.2" stroke-linejoin="round" clip-path="url(#r4)"/><path d="M1718.4,536.6 C1719.5,535.5 1722.5,531.3 1724.5,530.4 C1726.5,529.5 1727.5,532.0 1729.3,531.6 C1731.1,531.2 1732.9,528.7 1734.4,528.1 C1735.9,527.5 1736.2,527.8 1737.6,528.1 C1739.0,528.4 1740.6,529.8 1742.4,530.0 C1744.2,530.2 1746.2,528.9 1747.5,529.4 C1748.8,529.9 1748.8,531.3 1749.4,532.6 C1750.0,533.9 1750.3,535.6 1750.7,536.6 C1751.1,537.6 1751.3,537.9 1751.6,537.9 C1751.9,537.9 1751.9,537.7 1752.6,536.6 C1753.3,535.5 1753.9,533.1 1755.5,532.0 C1757.1,530.9 1759.2,531.5 1761.3,530.7 C1763.4,529.9 1765.3,528.0 1767.0,527.6 C1768.7,527.2 1769.5,527.8 1770.9,528.4 C1772.3,529.0 1773.7,530.6 1775.0,530.8 C1776.3,531.0 1776.6,528.7 1778.2,529.4 C1779.8,530.1 1783.0,533.8 1784.0,534.8" fill="none" stroke="#2b972f" stroke-width="1.2" stroke-linejoin="round" clip-path="url(#g5)"/><path d="M1718.4,536.6 C1719.5,535.5 1722.5,531.3 1724.5,530.4 C1726.5,529.5 1727.5,532.0 1729.3,531.6 C1731.1,531.2 1732.9,528.7 1734.4,528.1 C1735.9,527.5 1736.2,527.8 1737.6,528.1 C1739.0,528.4 1740.6,529.8 1742.4,530.0 C1744.2,530.2 1746.2,528.9 1747.5,529.4 C1748.8,529.9 1748.8,531.3 1749.4,532.6 C1750.0,533.9 1750.3,535.6 1750.7,536.6 C1751.1,537.6 1751.3,537.9 1751.6,537.9 C1751.9,537.9 1751.9,537.7 1752.6,536.6 C1753.3,535.5 1753.9,533.1 1755.5,532.0 C1757.1,530.9 1759.2,531.5 1761.3,530.7 C1763.4,529.9 1765.3,528.0 1767.0,527.6 C1768.7,527.2 1769.5,527.8 1770.9,528.4 C1772.3,529.0 1773.7,530.6 1775.0,530.8 C1776.3,531.0 1776.6,528.7 1778.2,529.4 C1779.8,530.1 1783.0,533.8 1784.0,534.8" fill="none" stroke="#f6715a" stroke-width="1.2" stroke-linejoin="round" clip-path="url(#r5)"/><path d="M1698.2,573.9 C1699.4,573.2 1702.3,570.5 1705.0,569.8 C1707.7,569.1 1710.7,570.6 1713.3,570.0 C1715.9,569.4 1717.9,567.1 1719.7,566.5 C1721.5,565.9 1721.9,566.1 1723.5,566.8 C1725.1,567.5 1726.5,569.8 1728.6,570.4 C1730.7,571.0 1733.3,569.4 1735.0,570.0 C1736.7,570.6 1736.9,572.2 1737.9,573.9 C1738.9,575.6 1738.9,579.6 1740.5,579.6 C1742.1,579.6 1744.8,575.3 1746.9,573.9 C1749.0,572.5 1750.0,572.9 1752.3,571.6 C1754.5,570.3 1757.5,567.7 1759.4,566.8 C1761.3,565.9 1761.3,566.0 1762.9,566.8 C1764.5,567.6 1766.9,570.2 1768.3,571.0 C1769.7,571.8 1769.7,571.5 1770.9,571.3 C1772.1,571.1 1773.2,569.5 1774.7,570.0 C1776.2,570.5 1777.8,572.8 1779.2,573.9 C1780.6,575.0 1782.1,575.6 1782.7,576.0" fill="none" stroke="#2b972f" stroke-width="1.5" stroke-linejoin="round" clip-path="url(#g6)"/><path d="M1698.2,573.9 C1699.4,573.2 1702.3,570.5 1705.0,569.8 C1707.7,569.1 1710.7,570.6 1713.3,570.0 C1715.9,569.4 1717.9,567.1 1719.7,566.5 C1721.5,565.9 1721.9,566.1 1723.5,566.8 C1725.1,567.5 1726.5,569.8 1728.6,570.4 C1730.7,571.0 1733.3,569.4 1735.0,570.0 C1736.7,570.6 1736.9,572.2 1737.9,573.9 C1738.9,575.6 1738.9,579.6 1740.5,579.6 C1742.1,579.6 1744.8,575.3 1746.9,573.9 C1749.0,572.5 1750.0,572.9 1752.3,571.6 C1754.5,570.3 1757.5,567.7 1759.4,566.8 C1761.3,565.9 1761.3,566.0 1762.9,566.8 C1764.5,567.6 1766.9,570.2 1768.3,571.0 C1769.7,571.8 1769.7,571.5 1770.9,571.3 C1772.1,571.1 1773.2,569.5 1774.7,570.0 C1776.2,570.5 1777.8,572.8 1779.2,573.9 C1780.6,575.0 1782.1,575.6 1782.7,576.0" fill="none" stroke="#f6715a" stroke-width="1.5" stroke-linejoin="round" clip-path="url(#r6)"/><path d="M1718.4,614.8 C1719.4,613.9 1722.2,610.6 1724.2,610.0 C1726.2,609.4 1727.4,611.8 1729.3,611.4 C1731.2,611.0 1733.5,608.4 1735.0,607.8 C1736.5,607.2 1736.2,607.5 1737.6,608.0 C1739.0,608.5 1740.9,610.1 1742.7,610.4 C1744.5,610.7 1746.2,608.7 1747.5,609.5 C1748.8,610.3 1749.4,613.3 1750.1,614.8 C1750.8,616.3 1751.0,617.6 1751.6,617.6 C1752.2,617.6 1752.5,615.8 1753.3,614.8 C1754.1,613.8 1754.9,612.5 1756.2,611.8 C1757.5,611.1 1758.8,611.5 1760.6,610.7 C1762.4,609.9 1764.7,608.2 1766.4,607.6 C1768.1,607.0 1768.7,607.3 1770.2,607.6 C1771.7,607.9 1773.2,609.3 1774.7,609.4 C1776.2,609.5 1776.9,607.4 1778.6,608.1 C1780.3,608.8 1783.0,612.3 1784.0,613.2" fill="none" stroke="#2b972f" stroke-width="1.2" stroke-linejoin="round" clip-path="url(#g7)"/><path d="M1718.4,614.8 C1719.4,613.9 1722.2,610.6 1724.2,610.0 C1726.2,609.4 1727.4,611.8 1729.3,611.4 C1731.2,611.0 1733.5,608.4 1735.0,607.8 C1736.5,607.2 1736.2,607.5 1737.6,608.0 C1739.0,608.5 1740.9,610.1 1742.7,610.4 C1744.5,610.7 1746.2,608.7 1747.5,609.5 C1748.8,610.3 1749.4,613.3 1750.1,614.8 C1750.8,616.3 1751.0,617.6 1751.6,617.6 C1752.2,617.6 1752.5,615.8 1753.3,614.8 C1754.1,613.8 1754.9,612.5 1756.2,611.8 C1757.5,611.1 1758.8,611.5 1760.6,610.7 C1762.4,609.9 1764.7,608.2 1766.4,607.6 C1768.1,607.0 1768.7,607.3 1770.2,607.6 C1771.7,607.9 1773.2,609.3 1774.7,609.4 C1776.2,609.5 1776.9,607.4 1778.6,608.1 C1780.3,608.8 1783.0,612.3 1784.0,613.2" fill="none" stroke="#f6715a" stroke-width="1.2" stroke-linejoin="round" clip-path="url(#r7)"/><path d="M1698.2,737.5 C1699.5,736.2 1703.2,731.6 1705.3,730.4 C1707.4,729.2 1707.7,731.8 1709.8,731.1 C1711.9,730.4 1715.1,727.2 1717.1,726.4 C1719.1,725.6 1719.1,726.3 1721.0,726.8 C1722.9,727.3 1725.4,729.0 1727.7,729.4 C1730.0,729.8 1731.5,727.6 1733.8,728.8 C1736.1,730.0 1738.6,735.8 1740.5,736.1 C1742.4,736.4 1743.3,731.6 1744.6,730.4 C1745.9,729.2 1746.4,729.5 1747.8,729.6 C1749.2,729.7 1750.6,730.5 1752.3,730.7 C1754.0,730.9 1755.4,730.1 1757.4,730.7 C1759.4,731.3 1761.5,733.5 1763.2,734.2 C1764.9,734.9 1765.6,734.2 1767.0,734.5 C1768.4,734.8 1769.6,735.9 1770.9,735.8 C1772.2,735.7 1773.2,733.8 1774.4,734.2 C1775.6,734.6 1776.4,737.0 1777.3,738.0 C1778.2,739.0 1778.5,739.4 1779.5,739.6 C1780.5,739.8 1782.1,739.4 1782.7,739.3" fill="none" stroke="#2b972f" stroke-width="1.5" stroke-linejoin="round" clip-path="url(#g10)"/><path d="M1698.2,737.5 C1699.5,736.2 1703.2,731.6 1705.3,730.4 C1707.4,729.2 1707.7,731.8 1709.8,731.1 C1711.9,730.4 1715.1,727.2 1717.1,726.4 C1719.1,725.6 1719.1,726.3 1721.0,726.8 C1722.9,727.3 1725.4,729.0 1727.7,729.4 C1730.0,729.8 1731.5,727.6 1733.8,728.8 C1736.1,730.0 1738.6,735.8 1740.5,736.1 C1742.4,736.4 1743.3,731.6 1744.6,730.4 C1745.9,729.2 1746.4,729.5 1747.8,729.6 C1749.2,729.7 1750.6,730.5 1752.3,730.7 C1754.0,730.9 1755.4,730.1 1757.4,730.7 C1759.4,731.3 1761.5,733.5 1763.2,734.2 C1764.9,734.9 1765.6,734.2 1767.0,734.5 C1768.4,734.8 1769.6,735.9 1770.9,735.8 C1772.2,735.7 1773.2,733.8 1774.4,734.2 C1775.6,734.6 1776.4,737.0 1777.3,738.0 C1778.2,739.0 1778.5,739.4 1779.5,739.6 C1780.5,739.8 1782.1,739.4 1782.7,739.3" fill="none" stroke="#f6715a" stroke-width="1.5" stroke-linejoin="round" clip-path="url(#r10)"/><path d="M1718.4,776.8 C1719.4,775.8 1722.5,772.4 1724.2,771.4 C1725.9,770.4 1726.3,772.0 1728.0,771.4 C1729.7,770.8 1732.3,768.6 1733.8,768.0 C1735.3,767.4 1734.9,767.8 1736.3,768.2 C1737.7,768.6 1739.7,770.1 1741.4,770.4 C1743.1,770.7 1744.7,769.7 1745.9,769.9 C1747.1,770.1 1747.2,770.3 1748.2,771.3 C1749.2,772.3 1750.5,775.5 1751.6,775.5 C1752.7,775.5 1753.3,772.2 1754.2,771.3 C1755.1,770.4 1755.6,770.6 1756.8,770.6 C1758.0,770.6 1759.2,771.3 1760.6,771.4 C1762.0,771.5 1763.0,770.9 1764.5,771.4 C1766.0,771.9 1767.6,773.8 1769.0,774.4 C1770.4,775.0 1771.2,774.3 1772.2,774.5 C1773.2,774.7 1773.7,775.5 1774.7,775.5 C1775.7,775.5 1776.9,774.1 1777.9,774.4 C1778.9,774.7 1779.8,776.7 1780.5,777.4 C1781.2,778.1 1781.1,778.3 1781.8,778.5 C1782.5,778.7 1783.8,778.4 1784.3,778.4" fill="none" stroke="#2b972f" stroke-width="1.2" stroke-linejoin="round" clip-path="url(#g11)"/><path d="M1718.4,776.8 C1719.4,775.8 1722.5,772.4 1724.2,771.4 C1725.9,770.4 1726.3,772.0 1728.0,771.4 C1729.7,770.8 1732.3,768.6 1733.8,768.0 C1735.3,767.4 1734.9,767.8 1736.3,768.2 C1737.7,768.6 1739.7,770.1 1741.4,770.4 C1743.1,770.7 1744.7,769.7 1745.9,769.9 C1747.1,770.1 1747.2,770.3 1748.2,771.3 C1749.2,772.3 1750.5,775.5 1751.6,775.5 C1752.7,775.5 1753.3,772.2 1754.2,771.3 C1755.1,770.4 1755.6,770.6 1756.8,770.6 C1758.0,770.6 1759.2,771.3 1760.6,771.4 C1762.0,771.5 1763.0,770.9 1764.5,771.4 C1766.0,771.9 1767.6,773.8 1769.0,774.4 C1770.4,775.0 1771.2,774.3 1772.2,774.5 C1773.2,774.7 1773.7,775.5 1774.7,775.5 C1775.7,775.5 1776.9,774.1 1777.9,774.4 C1778.9,774.7 1779.8,776.7 1780.5,777.4 C1781.2,778.1 1781.1,778.3 1781.8,778.5 C1782.5,778.7 1783.8,778.4 1784.3,778.4" fill="none" stroke="#f6715a" stroke-width="1.2" stroke-linejoin="round" clip-path="url(#r11)"/><path d="M1698.2,814.2 C1699.3,813.8 1702.0,812.2 1704.3,811.8 C1706.5,811.4 1708.3,812.5 1710.7,812.2 C1713.1,811.9 1715.7,810.3 1717.8,810.0 C1719.9,809.7 1720.3,810.0 1722.2,810.7 C1724.1,811.4 1726.3,813.1 1728.6,813.7 C1730.9,814.3 1733.6,813.7 1735.0,813.9 C1736.4,814.1 1735.6,813.7 1736.6,814.7 C1737.6,815.7 1738.8,819.4 1740.8,819.3 C1742.8,819.2 1745.7,815.6 1747.8,814.2 C1749.9,812.9 1750.4,812.9 1752.3,811.8 C1754.2,810.7 1756.2,808.8 1758.1,808.1 C1760.0,807.4 1761.0,808.1 1762.6,807.8 C1764.2,807.5 1765.5,806.3 1767.0,806.4 C1768.5,806.5 1769.5,807.9 1770.9,808.3 C1772.3,808.7 1773.3,807.9 1774.7,808.4 C1776.1,808.9 1777.2,810.3 1778.6,811.3 C1780.0,812.3 1781.7,813.3 1782.4,813.7" fill="none" stroke="#2b972f" stroke-width="1.5" stroke-linejoin="round" clip-path="url(#g12)"/><path d="M1698.2,814.2 C1699.3,813.8 1702.0,812.2 1704.3,811.8 C1706.5,811.4 1708.3,812.5 1710.7,812.2 C1713.1,811.9 1715.7,810.3 1717.8,810.0 C1719.9,809.7 1720.3,810.0 1722.2,810.7 C1724.1,811.4 1726.3,813.1 1728.6,813.7 C1730.9,814.3 1733.6,813.7 1735.0,813.9 C1736.4,814.1 1735.6,813.7 1736.6,814.7 C1737.6,815.7 1738.8,819.4 1740.8,819.3 C1742.8,819.2 1745.7,815.6 1747.8,814.2 C1749.9,812.9 1750.4,812.9 1752.3,811.8 C1754.2,810.7 1756.2,808.8 1758.1,808.1 C1760.0,807.4 1761.0,808.1 1762.6,807.8 C1764.2,807.5 1765.5,806.3 1767.0,806.4 C1768.5,806.5 1769.5,807.9 1770.9,808.3 C1772.3,808.7 1773.3,807.9 1774.7,808.4 C1776.1,808.9 1777.2,810.3 1778.6,811.3 C1780.0,812.3 1781.7,813.3 1782.4,813.7" fill="none" stroke="#f6715a" stroke-width="1.5" stroke-linejoin="round" clip-path="url(#r12)"/><path d="M1718.4,898.8 C1719.3,897.9 1721.3,894.6 1723.5,893.7 C1725.7,892.8 1728.6,894.3 1730.6,893.6 C1732.6,892.9 1732.6,890.5 1734.4,889.8 C1736.2,889.1 1739.0,889.9 1740.8,889.6 C1742.6,889.3 1743.4,888.6 1744.6,888.4 C1745.8,888.2 1746.3,886.9 1747.5,888.6 C1748.7,890.3 1750.1,897.2 1751.4,897.9 C1752.7,898.6 1753.4,893.7 1754.9,892.3 C1756.4,890.9 1758.3,890.9 1760.0,890.2 C1761.7,889.5 1762.7,888.4 1764.5,888.3 C1766.3,888.2 1768.4,888.9 1770.2,889.6 C1772.0,890.3 1773.2,891.6 1774.7,892.0 C1776.2,892.4 1776.9,891.3 1778.6,891.8 C1780.3,892.2 1783.0,894.0 1784.0,894.5" fill="none" stroke="#2b972f" stroke-width="1.2" stroke-linejoin="round" clip-path="url(#g14)"/><path d="M1718.4,898.8 C1719.3,897.9 1721.3,894.6 1723.5,893.7 C1725.7,892.8 1728.6,894.3 1730.6,893.6 C1732.6,892.9 1732.6,890.5 1734.4,889.8 C1736.2,889.1 1739.0,889.9 1740.8,889.6 C1742.6,889.3 1743.4,888.6 1744.6,888.4 C1745.8,888.2 1746.3,886.9 1747.5,888.6 C1748.7,890.3 1750.1,897.2 1751.4,897.9 C1752.7,898.6 1753.4,893.7 1754.9,892.3 C1756.4,890.9 1758.3,890.9 1760.0,890.2 C1761.7,889.5 1762.7,888.4 1764.5,888.3 C1766.3,888.2 1768.4,888.9 1770.2,889.6 C1772.0,890.3 1773.2,891.6 1774.7,892.0 C1776.2,892.4 1776.9,891.3 1778.6,891.8 C1780.3,892.2 1783.0,894.0 1784.0,894.5" fill="none" stroke="#f6715a" stroke-width="1.2" stroke-linejoin="round" clip-path="url(#r14)"/><path d="M1718.4,938.4 C1719.2,937.2 1721.3,933.1 1722.9,931.8 C1724.5,930.5 1725.6,931.7 1727.4,931.3 C1729.2,930.9 1731.6,929.9 1733.1,929.7 C1734.6,929.5 1734.5,929.5 1735.7,930.0 C1736.9,930.5 1737.8,932.0 1739.5,932.3 C1741.2,932.6 1743.2,930.9 1745.3,931.4 C1747.4,931.9 1749.3,934.8 1751.4,934.8 C1753.5,934.8 1755.3,931.8 1756.8,931.2 C1758.3,930.6 1758.3,932.0 1760.0,931.4 C1761.7,930.8 1763.6,927.5 1766.1,927.8 C1768.6,928.1 1772.1,932.2 1774.1,933.2 C1776.1,934.2 1776.0,933.1 1777.3,933.6 C1778.6,934.1 1779.9,935.5 1781.1,936.1 C1782.3,936.7 1783.5,937.0 1784.0,937.2" fill="none" stroke="#2b972f" stroke-width="1.2" stroke-linejoin="round" clip-path="url(#g15)"/><path d="M1718.4,938.4 C1719.2,937.2 1721.3,933.1 1722.9,931.8 C1724.5,930.5 1725.6,931.7 1727.4,931.3 C1729.2,930.9 1731.6,929.9 1733.1,929.7 C1734.6,929.5 1734.5,929.5 1735.7,930.0 C1736.9,930.5 1737.8,932.0 1739.5,932.3 C1741.2,932.6 1743.2,930.9 1745.3,931.4 C1747.4,931.9 1749.3,934.8 1751.4,934.8 C1753.5,934.8 1755.3,931.8 1756.8,931.2 C1758.3,930.6 1758.3,932.0 1760.0,931.4 C1761.7,930.8 1763.6,927.5 1766.1,927.8 C1768.6,928.1 1772.1,932.2 1774.1,933.2 C1776.1,934.2 1776.0,933.1 1777.3,933.6 C1778.6,934.1 1779.9,935.5 1781.1,936.1 C1782.3,936.7 1783.5,937.0 1784.0,937.2" fill="none" stroke="#f6715a" stroke-width="1.2" stroke-linejoin="round" clip-path="url(#r15)"/><path d="M1718.4,652.6 C1719.1,652.2 1720.1,651.1 1722.2,650.6 C1724.3,650.1 1727.7,650.4 1729.9,649.9 C1732.1,649.4 1733.0,648.3 1734.4,648.0 C1735.8,647.7 1736.3,647.7 1737.6,648.0 C1738.9,648.3 1739.8,649.3 1741.4,649.9 C1743.0,650.5 1745.3,650.6 1746.6,651.1 C1747.9,651.6 1747.9,651.4 1748.8,652.6 C1749.7,653.8 1749.9,658.1 1751.7,658.0 C1753.5,657.9 1756.3,654.0 1758.7,652.2 C1761.1,650.4 1763.4,649.0 1765.1,648.2 C1766.8,647.4 1767.0,647.0 1768.3,647.8 C1769.6,648.6 1771.2,651.5 1772.2,652.5 C1773.2,653.5 1773.0,653.4 1774.1,653.5 C1775.2,653.6 1776.9,652.5 1778.2,652.8 C1779.5,653.1 1780.0,654.7 1781.1,655.4 C1782.2,656.1 1783.7,656.4 1784.3,656.6" fill="none" stroke="#2b972f" stroke-width="1.2" stroke-linejoin="round" clip-path="url(#g8)"/><path d="M1718.4,652.6 C1719.1,652.2 1720.1,651.1 1722.2,650.6 C1724.3,650.1 1727.7,650.4 1729.9,649.9 C1732.1,649.4 1733.0,648.3 1734.4,648.0 C1735.8,647.7 1736.3,647.7 1737.6,648.0 C1738.9,648.3 1739.8,649.3 1741.4,649.9 C1743.0,650.5 1745.3,650.6 1746.6,651.1 C1747.9,651.6 1747.9,651.4 1748.8,652.6 C1749.7,653.8 1749.9,658.1 1751.7,658.0 C1753.5,657.9 1756.3,654.0 1758.7,652.2 C1761.1,650.4 1763.4,649.0 1765.1,648.2 C1766.8,647.4 1767.0,647.0 1768.3,647.8 C1769.6,648.6 1771.2,651.5 1772.2,652.5 C1773.2,653.5 1773.0,653.4 1774.1,653.5 C1775.2,653.6 1776.9,652.5 1778.2,652.8 C1779.5,653.1 1780.0,654.7 1781.1,655.4 C1782.2,656.1 1783.7,656.4 1784.3,656.6" fill="none" stroke="#f6715a" stroke-width="1.2" stroke-linejoin="round" clip-path="url(#r8)"/><path d="M1718.4,692.6 C1719.1,692.2 1720.1,691.1 1722.2,690.6 C1724.3,690.1 1727.7,690.4 1729.9,689.9 C1732.1,689.4 1733.0,688.3 1734.4,688.0 C1735.8,687.7 1736.3,687.7 1737.6,688.0 C1738.9,688.3 1739.8,689.3 1741.4,689.9 C1743.0,690.5 1745.3,690.6 1746.6,691.1 C1747.9,691.6 1747.9,691.3 1748.8,692.6 C1749.7,693.9 1749.9,698.4 1751.7,698.4 C1753.5,698.4 1756.3,694.4 1758.7,692.6 C1761.1,690.8 1763.4,689.4 1765.1,688.6 C1766.8,687.8 1767.0,687.4 1768.3,688.2 C1769.6,689.0 1771.2,691.9 1772.2,692.9 C1773.2,693.9 1773.0,693.8 1774.1,693.9 C1775.2,694.0 1776.9,692.9 1778.2,693.2 C1779.5,693.5 1780.0,695.1 1781.1,695.8 C1782.2,696.5 1783.7,696.8 1784.3,697.0" fill="none" stroke="#2b972f" stroke-width="1.2" stroke-linejoin="round" clip-path="url(#g9)"/><path d="M1718.4,692.6 C1719.1,692.2 1720.1,691.1 1722.2,690.6 C1724.3,690.1 1727.7,690.4 1729.9,689.9 C1732.1,689.4 1733.0,688.3 1734.4,688.0 C1735.8,687.7 1736.3,687.7 1737.6,688.0 C1738.9,688.3 1739.8,689.3 1741.4,689.9 C1743.0,690.5 1745.3,690.6 1746.6,691.1 C1747.9,691.6 1747.9,691.3 1748.8,692.6 C1749.7,693.9 1749.9,698.4 1751.7,698.4 C1753.5,698.4 1756.3,694.4 1758.7,692.6 C1761.1,690.8 1763.4,689.4 1765.1,688.6 C1766.8,687.8 1767.0,687.4 1768.3,688.2 C1769.6,689.0 1771.2,691.9 1772.2,692.9 C1773.2,693.9 1773.0,693.8 1774.1,693.9 C1775.2,694.0 1776.9,692.9 1778.2,693.2 C1779.5,693.5 1780.0,695.1 1781.1,695.8 C1782.2,696.5 1783.7,696.8 1784.3,697.0" fill="none" stroke="#f6715a" stroke-width="1.2" stroke-linejoin="round" clip-path="url(#r9)"/></svg>
<div class="a" style="left:279.6px;top:193px;width:1.3px;height:761px;background:#fff"></div>
<div class="a" style="left:280px;top:1210.4px;width:1645px;height:12.4px;background:#e8e9ec;border-top:1px solid #d9dee6"></div>
<div class="a" style="left:282.2px;top:1212.2px;width:1578.6px;height:10.1px;background:#8c8c8c;border-radius:3px"></div>
<div class="a" style="left:1831px;top:148px;width:93px;height:34px;background:#fff;border-radius:4px;box-shadow:0 2px 6px rgba(0,0,0,0.2),0 0 0 0.6px rgba(0,0,0,0.06)"></div>
<div class="t" style="left:1846.49px;top:156.2px;font-size:14px;color:#1a1e27;line-height:18px;height:18px;font-weight:bold;transform:scaleX(0.9569);transform-origin:0 50%;">Top News</div>
<div class="a" style="left:603.4px;top:244px;width:349.8px;height:144.8px;background:#fff;border-radius:5px;box-shadow:0 1px 8px rgba(20,30,60,0.28)"></div>
<div class="t" style="left:618.51px;top:259.2px;font-size:16.25px;color:#1a1e27;line-height:22px;height:22px;font-weight:bold;transform:scaleX(1.0526);transform-origin:0 50%;">Bulk Actions</div>
<div class="a" style="left:605.6px;top:294.2px;width:345.2px;height:49.9px;border:3.5px solid #0a7cff;border-radius:13px;background:#fff"></div>
<svg style="left:614px;top:309px;" width="18" height="16" viewBox="0 0 18 16"><path d="M2.4,13.6 V10.2 A2,2 0 0 1 4.4,8.2 H15" fill="none" stroke="#4b505b" stroke-width="1.5" stroke-linecap="round"/><path d="M11.6,4.6 L15.2,8.2 L11.6,11.8" fill="none" stroke="#4b505b" stroke-width="1.5" stroke-linecap="round" stroke-linejoin="round"/></svg>
<div class="t" style="left:642.85px;top:307.5px;font-size:14.5px;color:#1a1e27;line-height:20px;height:20px;-webkit-text-stroke:0.3px #1a1e27;transform:scaleX(1.0527);transform-origin:0 50%;">Move To</div>
<svg style="left:614px;top:356px;" width="18" height="18" viewBox="0 0 18 18"><path d="M9.6,2.6 L15.4,8.4 A1.2,1.2 0 0 1 15.4,10.1 L11.6,13.9 H6.2 L3,10.7 A1.2,1.2 0 0 1 3,9 Z" fill="#4b505b"/><path d="M5.2,8.6 L9.4,12.8 H6.8 L3.9,9.9Z" fill="#fff"/><path d="M5,14.6 H15.6" stroke="#4b505b" stroke-width="1.3" stroke-linecap="round"/></svg>
<div class="t" style="left:643.54px;top:355.1px;font-size:14.5px;color:#1a1e27;line-height:20px;height:20px;-webkit-text-stroke:0.3px #1a1e27;transform:scaleX(1.0365);transform-origin:0 50%;">Clear</div>
</div></body></html>
